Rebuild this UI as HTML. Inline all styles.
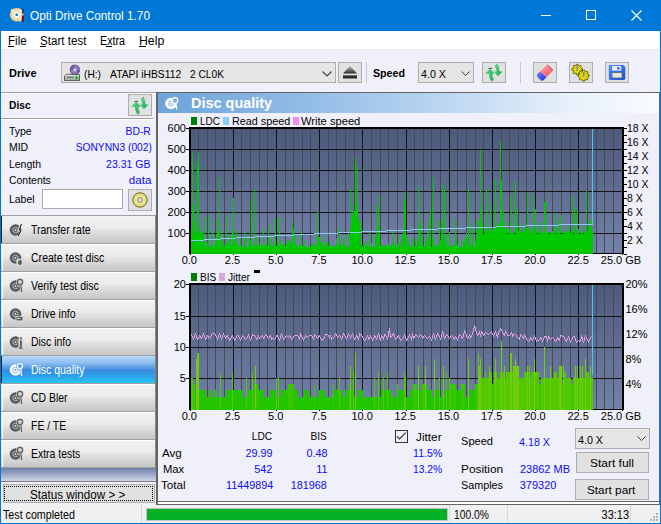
<!DOCTYPE html>
<html><head><meta charset="utf-8"><style>
html,body{margin:0;padding:0;width:661px;height:524px;overflow:hidden;background:#f0f0fa;position:relative}
.t{position:absolute;white-space:pre;font-family:"Liberation Sans", sans-serif}
</style></head><body>
<div style="position:absolute;left:0px;top:0px;width:661px;height:31px;background:#0078d7"></div>
<svg style="position:absolute;left:6px;top:4px" width="22" height="22" viewBox="6 4 22 22">
<defs><radialGradient id="cdg" cx="0.5" cy="0.5" r="0.5"><stop offset="0" stop-color="#fffdf2"/><stop offset="0.5" stop-color="#f4e8c0"/><stop offset="0.85" stop-color="#e2cf98"/><stop offset="1" stop-color="#c8b078"/></radialGradient></defs>
<circle cx="16.7" cy="14.7" r="7" fill="url(#cdg)"/>
<path d="M16.7 14.7 L12 8.5 L10.5 10.5 Z M16.7 14.7 L22 19.5 L23.2 17 Z" fill="#fff8e0" opacity="0.8"/>
<circle cx="16.7" cy="14.7" r="2.3" fill="#f8f8f8"/><circle cx="16.7" cy="14.7" r="1.3" fill="#0078d7"/>
<rect x="19.6" y="9" width="1.6" height="12.5" fill="#e8e8e8"/>
<rect x="22" y="8.5" width="1.8" height="5" fill="#203a80"/><rect x="21.8" y="15.5" width="2.2" height="6" fill="#801010"/></svg>
<div class="t" style="left:30.41px;top:10px;font-size:12px;line-height:12px;color:#fff;font-weight:normal;transform:scaleX(0.9830);transform-origin:left top;">Opti Drive Control 1.70</div>
<div style="position:absolute;left:541px;top:15px;width:10px;height:1px;background:#fff"></div>
<div style="position:absolute;left:586px;top:10px;width:10px;height:10px;border:1px solid #fff;box-sizing:border-box"></div>
<svg style="position:absolute;left:631px;top:10px" width="11" height="11" viewBox="0 0 11 11"><path d="M0.5 0.5 L10.5 10.5 M10.5 0.5 L0.5 10.5" stroke="#fff" stroke-width="1.1"/></svg>
<div style="position:absolute;left:1px;top:31px;width:659px;height:18px;background:#fff"></div>
<div style="position:absolute;left:1px;top:49px;width:659px;height:1px;background:#ebebeb"></div>
<div class="t" style="left:8.12px;top:35px;font-size:12px;line-height:12px;color:#000;font-weight:normal;transform:scaleX(0.9649);transform-origin:left top;">File</div>
<div style="position:absolute;left:8px;top:46px;width:6px;height:1px;background:#000"></div>
<div class="t" style="left:39.62px;top:35px;font-size:12px;line-height:12px;color:#000;font-weight:normal;transform:scaleX(0.9674);transform-origin:left top;">Start test</div>
<div style="position:absolute;left:40px;top:46px;width:6px;height:1px;background:#000"></div>
<div class="t" style="left:99.75px;top:35px;font-size:12px;line-height:12px;color:#000;font-weight:normal;transform:scaleX(0.8958);transform-origin:left top;">Extra</div>
<div style="position:absolute;left:106px;top:46px;width:6px;height:1px;background:#000"></div>
<div class="t" style="left:138.89px;top:35px;font-size:12px;line-height:12px;color:#000;font-weight:normal;transform:scaleX(1.0216);transform-origin:left top;">Help</div>
<div style="position:absolute;left:139px;top:46px;width:7px;height:1px;background:#000"></div>
<div style="position:absolute;left:1px;top:50px;width:659px;height:42px;background:#f0f0fa"></div>
<div class="t" style="left:9.00px;top:68px;font-size:11px;line-height:11px;color:#000;font-weight:bold;">Drive</div>
<div style="position:absolute;left:61px;top:62px;width:275px;height:21px;background:#e5e5e5;border:1px solid #adadad;box-sizing:border-box"></div>
<svg style="position:absolute;left:62px;top:63px" width="20" height="19" viewBox="62 63 20 19">
<defs><radialGradient id="pd" cx="0.5" cy="0.5" r="0.5"><stop offset="0" stop-color="#f8f4ff"/><stop offset="0.35" stop-color="#9a88c8"/><stop offset="1" stop-color="#7058a8"/></radialGradient>
<linearGradient id="dr" x1="0" y1="0" x2="0" y2="1"><stop offset="0" stop-color="#f0f0f0"/><stop offset="1" stop-color="#9a9a9a"/></linearGradient></defs>
<circle cx="74.9" cy="69.8" r="5.2" fill="url(#pd)"/>
<path d="M74.9 69.8 L70.5 67 L70 69 Z M74.9 69.8 L79 73 L79.8 71 Z M74.9 69.8 L73 64.8 L71.5 65.8 Z" fill="#50408a" opacity="0.7"/>
<circle cx="74.9" cy="69.8" r="0.9" fill="#fff"/>
<path d="M64.5 80.5 V76 L66.5 74.3 H71 L72 74.5 H79.5 V80.5 Z" fill="url(#dr)" stroke="#505050" stroke-width="0.9"/>
<rect x="66.5" y="76.5" width="7" height="1.5" fill="#707070"/>
<path d="M76.5 75.8 V79.2 M74.8 77.5 H78.2" stroke="#10c010" stroke-width="1.4"/></svg>
<div class="t" style="left:83.94px;top:69px;font-size:11px;line-height:11px;color:#000;font-weight:normal;transform:scaleX(0.9234);transform-origin:left top;">(H:)</div>
<div class="t" style="left:109.53px;top:69px;font-size:11px;line-height:11px;color:#000;font-weight:normal;transform:scaleX(0.9397);transform-origin:left top;">ATAPI iHBS112</div>
<div class="t" style="left:189.54px;top:69px;font-size:11px;line-height:11px;color:#000;font-weight:normal;transform:scaleX(0.9243);transform-origin:left top;">2 CL0K</div>
<svg style="position:absolute;left:322px;top:71px" width="10" height="6" viewBox="0 0 10 6"><path d="M0.5 0.5 L5 5 L9.5 0.5" fill="none" stroke="#404040" stroke-width="1.1"/></svg>
<div style="position:absolute;left:338px;top:62px;width:24px;height:21px;background:#e1e1e1;border:1px solid #adadad;box-sizing:border-box"></div>
<svg style="position:absolute;left:338px;top:62px" width="24" height="21" viewBox="338 62 24 21"><defs><linearGradient id="ej" x1="0" y1="0" x2="0" y2="1"><stop offset="0" stop-color="#c0c0c0"/><stop offset="1" stop-color="#282828"/></linearGradient></defs><path d="M350 66 L357 73.5 L343 73.5 Z" fill="url(#ej)"/><rect x="343" y="75" width="14" height="3.5" fill="#2a2a2a"/><rect x="343" y="75" width="14" height="1" fill="#707070"/></svg>
<div style="position:absolute;left:366px;top:62px;width:1px;height:21px;background:#c8c8c8"></div>
<div class="t" style="left:372.62px;top:68px;font-size:11px;line-height:11px;color:#000;font-weight:bold;transform:scaleX(0.9683);transform-origin:left top;">Speed</div>
<div style="position:absolute;left:418px;top:62px;width:56px;height:21px;background:#e5e5e5;border:1px solid #adadad;box-sizing:border-box"></div>
<div class="t" style="left:421.21px;top:69px;font-size:11px;line-height:11px;color:#000;font-weight:normal;transform:scaleX(0.9722);transform-origin:left top;">4.0 X</div>
<svg style="position:absolute;left:461px;top:71px" width="9" height="5" viewBox="0 0 9 5"><path d="M0.5 0.5 L4.5 4.5 L8.5 0.5" fill="none" stroke="#404040" stroke-width="1"/></svg>
<div style="position:absolute;left:482px;top:62px;width:24px;height:21px;background:#e1e1e1;border:1px solid #adadad;box-sizing:border-box"></div>
<svg style="position:absolute;left:482px;top:62px" width="24" height="21" viewBox="0 0 24 21">
<defs><linearGradient id="ga482" x1="0" y1="0" x2="1" y2="1"><stop offset="0" stop-color="#58d888"/><stop offset="1" stop-color="#22a850"/></linearGradient></defs>
<path d="M3 11.8 L8 6.8 L13 11.8 L10.3 11.8 Q10.4 15.2 11.8 18.2 L8.8 19 Q7 15.5 6.8 11.8 Z" fill="url(#ga482)"/>
<path d="M11.8 9.6 L16 14.3 L20.5 9.6 L17.7 9.6 Q17.3 5.8 15.6 2.6 L12.7 3.4 Q14.2 6.5 14.5 9.6 Z" fill="url(#ga482)"/>
<path d="M6.5 6.4 H10" stroke="#404040" stroke-width="0.9"/><path d="M14.8 3 L15.5 1.8 M16.8 4.5 L17.3 3.8 M9.8 18.8 L10.6 19.5 M11.6 16.5 L12.2 16" stroke="#505050" stroke-width="0.7"/></svg>
<div style="position:absolute;left:520px;top:62px;width:1px;height:21px;background:#c8c8c8"></div>
<div style="position:absolute;left:533px;top:62px;width:24px;height:21px;background:#e1e1e1;border:1px solid #adadad;box-sizing:border-box"></div>
<div style="position:absolute;left:569px;top:62px;width:24px;height:21px;background:#e1e1e1;border:1px solid #adadad;box-sizing:border-box"></div>
<div style="position:absolute;left:605px;top:62px;width:24px;height:21px;background:#e1e1e1;border:1px solid #adadad;box-sizing:border-box"></div>
<svg style="position:absolute;left:533px;top:62px" width="24" height="21" viewBox="533 62 24 21">
<defs><linearGradient id="er" x1="0" y1="0" x2="1" y2="1"><stop offset="0" stop-color="#ffa8b0"/><stop offset="1" stop-color="#f04858"/></linearGradient>
<linearGradient id="eb" x1="0" y1="0" x2="1" y2="1"><stop offset="0" stop-color="#7080ff"/><stop offset="1" stop-color="#2030e0"/></linearGradient></defs>
<path d="M540 71.6 L546.6 65.2 Q547.5 64.5 548.5 65.2 L552.8 69.2 Q553.4 70 552.7 70.8 L546.4 77.3 Z" fill="url(#er)"/>
<path d="M540 71.6 L546.4 77.3 L543.6 80.2 Q542.6 81 541.5 80.4 L537.3 76.6 Q536.5 75.6 537.2 74.6 Z" fill="url(#eb)"/>
<path d="M547.2 64.8 L553 70.2 M537 77 L541.5 81" stroke="#505050" stroke-width="0.6" opacity="0.7"/></svg>
<svg style="position:absolute;left:569px;top:62px" width="24" height="21" viewBox="569 62 24 21">
<path d="M581.05 68.41 L582.43 68.64 L582.43 70.36 L581.05 70.59 L580.69 71.45 L581.51 72.59 L580.29 73.81 L579.15 72.99 L578.29 73.35 L578.06 74.73 L576.34 74.73 L576.11 73.35 L575.25 72.99 L574.11 73.81 L572.89 72.59 L573.71 71.45 L573.35 70.59 L571.97 70.36 L571.97 68.64 L573.35 68.41 L573.71 67.55 L572.89 66.41 L574.11 65.19 L575.25 66.01 L576.11 65.65 L576.34 64.27 L578.06 64.27 L578.29 65.65 L579.15 66.01 L580.29 65.19 L581.51 66.41 L580.69 67.55Z" fill="#e4dc00" stroke="#4a4800" stroke-width="0.8"/>
<path d="M587.74 74.43 L589.13 74.69 L589.13 76.51 L587.74 76.77 L587.36 77.70 L588.15 78.86 L586.86 80.15 L585.70 79.36 L584.77 79.74 L584.51 81.13 L582.69 81.13 L582.43 79.74 L581.50 79.36 L580.34 80.15 L579.05 78.86 L579.84 77.70 L579.46 76.77 L578.07 76.51 L578.07 74.69 L579.46 74.43 L579.84 73.50 L579.05 72.34 L580.34 71.05 L581.50 71.84 L582.43 71.46 L582.69 70.07 L584.51 70.07 L584.77 71.46 L585.70 71.84 L586.86 71.05 L588.15 72.34 L587.36 73.50Z" fill="#e4dc00" stroke="#4a4800" stroke-width="0.8"/>
<rect x="576.4" y="65.8" width="1.7" height="5" fill="#8a8a8a"/><rect x="582.8" y="72" width="1.7" height="5" fill="#8a8a8a"/></svg>
<svg style="position:absolute;left:605px;top:62px" width="24" height="21" viewBox="605 62 24 21">
<defs><linearGradient id="fl" x1="0" y1="0" x2="1" y2="1"><stop offset="0" stop-color="#5090ff"/><stop offset="1" stop-color="#1850d8"/></linearGradient></defs>
<path d="M609.5 65 H623.3 L625.3 67 V78.6 Q625.3 80 623.9 80 H610.2 Q608.8 80 608.8 78.6 V65.7 Q608.8 65 609.5 65 Z" fill="url(#fl)"/>
<rect x="612" y="66" width="9.2" height="4.6" fill="#e8eaf0"/><circle cx="618.3" cy="68.3" r="1.2" fill="#2a60e8"/>
<rect x="612" y="72.4" width="10" height="5.6" fill="#e4e4e4" stroke="#606060" stroke-width="0.8"/></svg>
<div style="position:absolute;left:1px;top:92px;width:659px;height:1px;background:#a0a0a0"></div>
<div style="position:absolute;left:1px;top:93px;width:155px;height:1px;background:#fff"></div>
<div style="position:absolute;left:1px;top:94px;width:155px;height:430px;background:#f0f0fa"></div>
<div class="t" style="left:9.03px;top:100px;font-size:11px;line-height:11px;color:#000;font-weight:bold;transform:scaleX(0.9303);transform-origin:left top;">Disc</div>
<div style="position:absolute;left:128px;top:94px;width:24px;height:22px;background:#e1e1e1;border:1px solid #adadad;box-sizing:border-box"></div>
<svg style="position:absolute;left:128px;top:95px" width="24" height="21" viewBox="0 0 24 21">
<defs><linearGradient id="ga128" x1="0" y1="0" x2="1" y2="1"><stop offset="0" stop-color="#58d888"/><stop offset="1" stop-color="#22a850"/></linearGradient></defs>
<path d="M3 11.8 L8 6.8 L13 11.8 L10.3 11.8 Q10.4 15.2 11.8 18.2 L8.8 19 Q7 15.5 6.8 11.8 Z" fill="url(#ga128)"/>
<path d="M11.8 9.6 L16 14.3 L20.5 9.6 L17.7 9.6 Q17.3 5.8 15.6 2.6 L12.7 3.4 Q14.2 6.5 14.5 9.6 Z" fill="url(#ga128)"/>
<path d="M6.5 6.4 H10" stroke="#404040" stroke-width="0.9"/><path d="M14.8 3 L15.5 1.8 M16.8 4.5 L17.3 3.8 M9.8 18.8 L10.6 19.5 M11.6 16.5 L12.2 16" stroke="#505050" stroke-width="0.7"/></svg>
<div style="position:absolute;left:1px;top:118px;width:152px;height:1px;background:#a0a0a0"></div>
<div style="position:absolute;left:1px;top:119px;width:152px;height:1px;background:#fff"></div>
<div class="t" style="left:8.83px;top:126px;font-size:11px;line-height:11px;color:#000;font-weight:normal;transform:scaleX(0.9500);transform-origin:left top;">Type</div>
<div class="t" style="left:124.08px;top:126px;font-size:11px;line-height:11px;color:#0c0cf4;font-weight:normal;transform:scaleX(0.9463);transform-origin:right top;">BD-R</div>
<div class="t" style="left:8.83px;top:142px;font-size:11px;line-height:11px;color:#000;font-weight:normal;transform:scaleX(0.9500);transform-origin:left top;">MID</div>
<div class="t" style="left:69.84px;top:142px;font-size:11px;line-height:11px;color:#0c0cf4;font-weight:normal;transform:scaleX(0.9305);transform-origin:right top;">SONYNN3 (002)</div>
<div class="t" style="left:8.83px;top:159px;font-size:11px;line-height:11px;color:#000;font-weight:normal;transform:scaleX(0.9500);transform-origin:left top;">Length</div>
<div class="t" style="left:104.49px;top:159px;font-size:11px;line-height:11px;color:#0c0cf4;font-weight:normal;transform:scaleX(0.9564);transform-origin:right top;">23.31 GB</div>
<div class="t" style="left:8.83px;top:175px;font-size:11px;line-height:11px;color:#000;font-weight:normal;transform:scaleX(0.9500);transform-origin:left top;">Contents</div>
<div class="t" style="left:129.60px;top:175px;font-size:11px;line-height:11px;color:#0c0cf4;font-weight:normal;transform:scaleX(1.0528);transform-origin:right top;">data</div>
<div class="t" style="left:8.83px;top:194px;font-size:11px;line-height:11px;color:#000;font-weight:normal;transform:scaleX(0.9500);transform-origin:left top;">Label</div>
<div style="position:absolute;left:42px;top:189px;width:81px;height:20px;background:#fff;border:1px solid #a8a8a8;box-sizing:border-box"></div>
<div style="position:absolute;left:128px;top:189px;width:24px;height:22px;background:#e1e1e1;border:1px solid #adadad;box-sizing:border-box"></div>
<svg style="position:absolute;left:128px;top:189px" width="24" height="22" viewBox="0 0 24 22">
<defs><radialGradient id="yc" cx="0.5" cy="0.5" r="0.5"><stop offset="0" stop-color="#fbfbe0"/><stop offset="0.45" stop-color="#f2f0a8"/><stop offset="0.8" stop-color="#e0dc78"/><stop offset="1" stop-color="#b8b050"/></radialGradient></defs>
<circle cx="12" cy="11" r="7.3" fill="url(#yc)" stroke="#6a6a40" stroke-width="0.9"/><circle cx="12" cy="11" r="2.6" fill="#d8d8c8" stroke="#8a8a50" stroke-width="0.9"/></svg>
<div style="position:absolute;left:1px;top:215px;width:155px;height:1px;background:#a0a0a0"></div>
<div style="position:absolute;left:1px;top:216px;width:154px;height:27px;background:linear-gradient(#f2f2f2 0%,#ebebeb 45%,#e2e2e2 52%,#c6c6c6 100%)"></div>
<div style="position:absolute;left:1px;top:243px;width:154px;height:1px;background:#a0a0a0"></div>
<svg style="position:absolute;left:1px;top:216px" width="28" height="27" viewBox="0 0 28 27"><circle cx="14.5" cy="14" r="5.8" fill="#5c5c5c"/><circle cx="14.5" cy="14" r="2.6" fill="none" stroke="#d8d8d8" stroke-width="1.1" stroke-dasharray="1.2 0.8"/><circle cx="14.5" cy="14" r="0.9" fill="#d8d8d8"/><path d="M18.5 8 L20.8 7.5 L18.6 13.5 L20.5 13.3 L17 21 L17.8 15.5 L16.2 15.7 Z" fill="#d8d8d8"/><path d="M20.6 8 L18.2 13.8 L20 13.6 L17.3 20" fill="none" stroke="#202020" stroke-width="1"/></svg>
<div class="t" style="left:30.76px;top:224px;font-size:12px;line-height:12px;color:#000;font-weight:normal;transform:scaleX(0.8743);transform-origin:left top;">Transfer rate</div>
<div style="position:absolute;left:1px;top:244px;width:154px;height:27px;background:linear-gradient(#f2f2f2 0%,#ebebeb 45%,#e2e2e2 52%,#c6c6c6 100%)"></div>
<div style="position:absolute;left:1px;top:244px;width:154px;height:1px;background:#fff"></div>
<div style="position:absolute;left:1px;top:271px;width:154px;height:1px;background:#a0a0a0"></div>
<div style="position:absolute;left:2px;top:245px;width:1px;height:26px;background:#fafafa"></div>
<svg style="position:absolute;left:1px;top:244px" width="28" height="27" viewBox="0 0 28 27"><circle cx="14.5" cy="14" r="5.8" fill="#5c5c5c"/><circle cx="14.5" cy="14" r="2.6" fill="none" stroke="#d8d8d8" stroke-width="1.1" stroke-dasharray="1.2 0.8"/><circle cx="14.5" cy="14" r="0.9" fill="#d8d8d8"/><circle cx="18.8" cy="18" r="3.6" fill="#d8d8d8"/><path d="M18.5 21 Q16 19.5 17.5 16.5 Q18 18 19.2 15 Q21.5 17.5 20.5 20 Q20 21 18.5 21 Z" fill="#5c5c5c"/></svg>
<div class="t" style="left:30.76px;top:252px;font-size:12px;line-height:12px;color:#000;font-weight:normal;transform:scaleX(0.8789);transform-origin:left top;">Create test disc</div>
<div style="position:absolute;left:1px;top:272px;width:154px;height:27px;background:linear-gradient(#f2f2f2 0%,#ebebeb 45%,#e2e2e2 52%,#c6c6c6 100%)"></div>
<div style="position:absolute;left:1px;top:272px;width:154px;height:1px;background:#fff"></div>
<div style="position:absolute;left:1px;top:299px;width:154px;height:1px;background:#a0a0a0"></div>
<div style="position:absolute;left:2px;top:273px;width:1px;height:26px;background:#fafafa"></div>
<svg style="position:absolute;left:1px;top:272px" width="28" height="27" viewBox="0 0 28 27"><circle cx="14.5" cy="14" r="5.8" fill="#5c5c5c"/><circle cx="14.5" cy="14" r="2.6" fill="none" stroke="#d8d8d8" stroke-width="1.1" stroke-dasharray="1.2 0.8"/><circle cx="14.5" cy="14" r="0.9" fill="#d8d8d8"/><circle cx="19" cy="10" r="3.7" fill="#d8d8d8"/><circle cx="19" cy="10" r="2.6" fill="#d8d8d8" stroke="#5c5c5c" stroke-width="1.2"/><path d="M19.8 13.2 L20.6 20" stroke="#d8d8d8" stroke-width="2.6"/><path d="M19.8 13.2 L20.6 20" stroke="#5c5c5c" stroke-width="1.2"/></svg>
<div class="t" style="left:30.76px;top:280px;font-size:12px;line-height:12px;color:#000;font-weight:normal;transform:scaleX(0.8773);transform-origin:left top;">Verify test disc</div>
<div style="position:absolute;left:1px;top:300px;width:154px;height:27px;background:linear-gradient(#f2f2f2 0%,#ebebeb 45%,#e2e2e2 52%,#c6c6c6 100%)"></div>
<div style="position:absolute;left:1px;top:300px;width:154px;height:1px;background:#fff"></div>
<div style="position:absolute;left:1px;top:327px;width:154px;height:1px;background:#a0a0a0"></div>
<div style="position:absolute;left:2px;top:301px;width:1px;height:26px;background:#fafafa"></div>
<svg style="position:absolute;left:1px;top:300px" width="28" height="27" viewBox="0 0 28 27"><circle cx="14.5" cy="14" r="5.8" fill="#5c5c5c"/><circle cx="14.5" cy="14" r="2.6" fill="none" stroke="#d8d8d8" stroke-width="1.1" stroke-dasharray="1.2 0.8"/><circle cx="14.5" cy="14" r="0.9" fill="#d8d8d8"/><rect x="14.5" y="16" width="7.5" height="5" fill="#d8d8d8"/><rect x="15.5" y="16.8" width="6" height="3.6" fill="#5c5c5c"/><rect x="16.3" y="18" width="3" height="1" fill="#d8d8d8"/></svg>
<div class="t" style="left:30.76px;top:308px;font-size:12px;line-height:12px;color:#000;font-weight:normal;transform:scaleX(0.8795);transform-origin:left top;">Drive info</div>
<div style="position:absolute;left:1px;top:328px;width:154px;height:27px;background:linear-gradient(#f2f2f2 0%,#ebebeb 45%,#e2e2e2 52%,#c6c6c6 100%)"></div>
<div style="position:absolute;left:1px;top:328px;width:154px;height:1px;background:#fff"></div>
<div style="position:absolute;left:1px;top:355px;width:154px;height:1px;background:#a0a0a0"></div>
<div style="position:absolute;left:2px;top:329px;width:1px;height:26px;background:#fafafa"></div>
<svg style="position:absolute;left:1px;top:328px" width="28" height="27" viewBox="0 0 28 27"><circle cx="14.5" cy="14" r="5.8" fill="#5c5c5c"/><circle cx="14.5" cy="14" r="2.6" fill="none" stroke="#d8d8d8" stroke-width="1.1" stroke-dasharray="1.2 0.8"/><circle cx="14.5" cy="14" r="0.9" fill="#d8d8d8"/><rect x="17.5" y="9" width="4.5" height="12.5" fill="#d8d8d8"/><rect x="19" y="9.5" width="1.8" height="1.8" fill="#5c5c5c"/><rect x="19" y="12.5" width="1.8" height="7" fill="#5c5c5c"/><rect x="17.8" y="19.5" width="3.8" height="1.3" fill="#5c5c5c"/></svg>
<div class="t" style="left:30.77px;top:336px;font-size:12px;line-height:12px;color:#000;font-weight:normal;transform:scaleX(0.8700);transform-origin:left top;">Disc info</div>
<div style="position:absolute;left:1px;top:356px;width:154px;height:27px;background:linear-gradient(#b4d6f8 0%,#90c0f0 25%,#4c94e0 48%,#3a8ade 52%,#2aa6ea 78%,#28c4f4 100%)"></div>
<div style="position:absolute;left:1px;top:356px;width:154px;height:1px;#c8e4fc"></div>
<div style="position:absolute;left:1px;top:383px;width:154px;height:1px;background:#a0a0a0"></div>
<svg style="position:absolute;left:1px;top:356px" width="28" height="27" viewBox="0 0 28 27"><circle cx="14.5" cy="14" r="5.8" fill="#fff"/><circle cx="14.5" cy="14" r="2.6" fill="none" stroke="#5a9ee4" stroke-width="1.1" stroke-dasharray="1.2 0.8"/><circle cx="14.5" cy="14" r="0.9" fill="#5a9ee4"/><circle cx="19" cy="10" r="3.7" fill="#5a9ee4"/><circle cx="19" cy="10" r="2.6" fill="#5a9ee4" stroke="#fff" stroke-width="1.2"/><path d="M19.8 13.2 L20.6 20" stroke="#5a9ee4" stroke-width="2.6"/><path d="M19.8 13.2 L20.6 20" stroke="#fff" stroke-width="1.2"/></svg>
<div class="t" style="left:30.76px;top:364px;font-size:12px;line-height:12px;color:#fff;font-weight:normal;transform:scaleX(0.8714);transform-origin:left top;">Disc quality</div>
<div style="position:absolute;left:1px;top:384px;width:154px;height:27px;background:linear-gradient(#f2f2f2 0%,#ebebeb 45%,#e2e2e2 52%,#c6c6c6 100%)"></div>
<div style="position:absolute;left:1px;top:384px;width:154px;height:1px;background:#fff"></div>
<div style="position:absolute;left:1px;top:411px;width:154px;height:1px;background:#a0a0a0"></div>
<div style="position:absolute;left:2px;top:385px;width:1px;height:26px;background:#fafafa"></div>
<svg style="position:absolute;left:1px;top:384px" width="28" height="27" viewBox="0 0 28 27"><circle cx="14.5" cy="14" r="5.8" fill="#5c5c5c"/><circle cx="14.5" cy="14" r="2.6" fill="none" stroke="#d8d8d8" stroke-width="1.1" stroke-dasharray="1.2 0.8"/><circle cx="14.5" cy="14" r="0.9" fill="#d8d8d8"/><circle cx="19" cy="10" r="3.7" fill="#d8d8d8"/><circle cx="19" cy="10" r="2.6" fill="#d8d8d8" stroke="#5c5c5c" stroke-width="1.2"/><path d="M19.8 13.2 L20.6 20" stroke="#d8d8d8" stroke-width="2.6"/><path d="M19.8 13.2 L20.6 20" stroke="#5c5c5c" stroke-width="1.2"/></svg>
<div class="t" style="left:30.77px;top:392px;font-size:12px;line-height:12px;color:#000;font-weight:normal;transform:scaleX(0.8700);transform-origin:left top;">CD Bler</div>
<div style="position:absolute;left:1px;top:412px;width:154px;height:27px;background:linear-gradient(#f2f2f2 0%,#ebebeb 45%,#e2e2e2 52%,#c6c6c6 100%)"></div>
<div style="position:absolute;left:1px;top:412px;width:154px;height:1px;background:#fff"></div>
<div style="position:absolute;left:1px;top:439px;width:154px;height:1px;background:#a0a0a0"></div>
<div style="position:absolute;left:2px;top:413px;width:1px;height:26px;background:#fafafa"></div>
<svg style="position:absolute;left:1px;top:412px" width="28" height="27" viewBox="0 0 28 27"><circle cx="14.5" cy="14" r="5.8" fill="#5c5c5c"/><circle cx="14.5" cy="14" r="2.6" fill="none" stroke="#d8d8d8" stroke-width="1.1" stroke-dasharray="1.2 0.8"/><circle cx="14.5" cy="14" r="0.9" fill="#d8d8d8"/><circle cx="19" cy="10" r="3.7" fill="#d8d8d8"/><circle cx="19" cy="10" r="2.6" fill="#d8d8d8" stroke="#5c5c5c" stroke-width="1.2"/><path d="M19.8 13.2 L20.6 20" stroke="#d8d8d8" stroke-width="2.6"/><path d="M19.8 13.2 L20.6 20" stroke="#5c5c5c" stroke-width="1.2"/></svg>
<div class="t" style="left:30.77px;top:420px;font-size:12px;line-height:12px;color:#000;font-weight:normal;transform:scaleX(0.8700);transform-origin:left top;">FE / TE</div>
<div style="position:absolute;left:1px;top:440px;width:154px;height:27px;background:linear-gradient(#f2f2f2 0%,#ebebeb 45%,#e2e2e2 52%,#c6c6c6 100%)"></div>
<div style="position:absolute;left:1px;top:440px;width:154px;height:1px;background:#fff"></div>
<div style="position:absolute;left:1px;top:467px;width:154px;height:1px;background:#a0a0a0"></div>
<div style="position:absolute;left:2px;top:441px;width:1px;height:26px;background:#fafafa"></div>
<svg style="position:absolute;left:1px;top:440px" width="28" height="27" viewBox="0 0 28 27"><circle cx="14.5" cy="14" r="5.8" fill="#5c5c5c"/><circle cx="14.5" cy="14" r="2.6" fill="none" stroke="#d8d8d8" stroke-width="1.1" stroke-dasharray="1.2 0.8"/><circle cx="14.5" cy="14" r="0.9" fill="#d8d8d8"/><circle cx="19" cy="10" r="3.7" fill="#d8d8d8"/><circle cx="19" cy="10" r="2.6" fill="#d8d8d8" stroke="#5c5c5c" stroke-width="1.2"/><path d="M19.8 13.2 L20.6 20" stroke="#d8d8d8" stroke-width="2.6"/><path d="M19.8 13.2 L20.6 20" stroke="#5c5c5c" stroke-width="1.2"/></svg>
<div class="t" style="left:30.77px;top:448px;font-size:12px;line-height:12px;color:#000;font-weight:normal;transform:scaleX(0.8700);transform-origin:left top;">Extra tests</div>
<div style="position:absolute;left:1px;top:216px;width:1px;height:27px;background:#1a1a1a"></div>
<div style="position:absolute;left:155px;top:216px;width:1px;height:252px;background:#8a8a8a"></div>
<div style="position:absolute;left:1px;top:356px;width:1px;height:27px;background:#1a1a1a"></div>
<div style="position:absolute;left:1px;top:468px;width:155px;height:13px;background:linear-gradient(#6e7ea6,#d0d4e8)"></div>
<div style="position:absolute;left:1px;top:481px;width:155px;height:1px;background:#808080"></div>
<div style="position:absolute;left:1px;top:482px;width:155px;height:21px;background:#f0f0fa"></div>
<div style="position:absolute;left:3px;top:484px;width:152px;height:19px;background:#e1e1e1;border:1px solid #adadad;box-sizing:border-box"></div>
<div style="position:absolute;left:4px;top:486px;width:149px;height:15px;border:1px dotted #000;box-sizing:border-box"></div>
<div class="t" style="left:29.81px;top:489px;font-size:12px;line-height:12px;color:#000;font-weight:normal;transform:scaleX(0.9726);transform-origin:left top;">Status window &gt; &gt;</div>
<div style="position:absolute;left:158px;top:93px;width:501px;height:408px;background:#f0f0fa"></div>
<div style="position:absolute;left:156px;top:92px;width:504px;height:1px;background:#646464"></div>
<div style="position:absolute;left:156px;top:92px;width:2px;height:413px;background:#646464"></div>
<div style="position:absolute;left:659px;top:92px;width:1px;height:413px;background:#646464"></div>
<div style="position:absolute;left:156px;top:501px;width:504px;height:1px;background:#646464"></div>
<div style="position:absolute;left:158px;top:502px;width:501px;height:2px;background:#ffffff"></div>
<div style="position:absolute;left:156px;top:504px;width:504px;height:1px;background:#646464"></div>
<div style="position:absolute;left:158px;top:93px;width:501px;height:20px;background:linear-gradient(90deg,#6ea4d8 0%,#8cb8e4 25%,#b8d4f0 55%,#e4eefa 80%,#fafcff 100%)"></div>
<svg style="position:absolute;left:165px;top:97px" width="14" height="13" viewBox="0 0 14 13">
<circle cx="6" cy="6.5" r="5.8" fill="#fff"/><circle cx="6" cy="6.5" r="2.3" fill="none" stroke="#7aaee0" stroke-width="1"/><circle cx="6" cy="6.5" r="0.8" fill="#7aaee0"/>
<circle cx="10" cy="3.5" r="2.8" fill="#7aaee0" stroke="#fff" stroke-width="1.2"/><path d="M10.8 6.5 L11.8 12.5" stroke="#fff" stroke-width="1.3"/></svg>
<div class="t" style="left:191.32px;top:95px;font-size:15px;line-height:15px;color:#fff;font-weight:bold;transform:scaleX(0.9639);transform-origin:left top;">Disc quality</div>
<svg style="position:absolute;left:0;top:0" width="661" height="524" viewBox="0 0 661 524"><defs><linearGradient id="bg1" x1="0" y1="0" x2="0" y2="1"><stop offset="0" stop-color="#4c5a7c"/><stop offset="1" stop-color="#7382aa"/></linearGradient></defs><rect x="191" y="129" width="431" height="124" fill="url(#bg1)"/><path d="M198 129V253h1V129ZM207 129V253h1V129ZM215 129V253h1V129ZM224 129V253h1V129ZM241 129V253h1V129ZM250 129V253h1V129ZM259 129V253h1V129ZM267 129V253h1V129ZM285 129V253h1V129ZM293 129V253h1V129ZM302 129V253h1V129ZM310 129V253h1V129ZM328 129V253h1V129ZM336 129V253h1V129ZM345 129V253h1V129ZM354 129V253h1V129ZM371 129V253h1V129ZM380 129V253h1V129ZM388 129V253h1V129ZM397 129V253h1V129ZM414 129V253h1V129ZM423 129V253h1V129ZM431 129V253h1V129ZM440 129V253h1V129ZM457 129V253h1V129ZM466 129V253h1V129ZM475 129V253h1V129ZM483 129V253h1V129ZM501 129V253h1V129ZM509 129V253h1V129ZM518 129V253h1V129ZM526 129V253h1V129ZM544 129V253h1V129ZM552 129V253h1V129ZM561 129V253h1V129ZM570 129V253h1V129ZM587 129V253h1V129ZM596 129V253h1V129ZM604 129V253h1V129ZM613 129V253h1V129Z" fill="#4a4a4e" shape-rendering="crispEdges"/><path d="M233 129V253h1V129ZM276 129V253h1V129ZM319 129V253h1V129ZM362 129V253h1V129ZM406 129V253h1V129ZM449 129V253h1V129ZM492 129V253h1V129ZM535 129V253h1V129ZM578 129V253h1V129Z" fill="#141414" shape-rendering="crispEdges"/><path d="M191 149H622v1H191ZM191 170H622v1H191ZM191 191H622v1H191ZM191 212H622v1H191ZM191 233H622v1H191Z" fill="#141414" shape-rendering="crispEdges"/><path d="M191 253H622v1H191Z" fill="#000" shape-rendering="crispEdges"/><path d="M191 230V254h1V230ZM192 153V254h1V153ZM193 205V254h1V205ZM194 233V254h1V233ZM195 221V254h1V221ZM196 233V254h1V233ZM197 162V254h1V162ZM198 152V254h1V152ZM199 226V254h1V226ZM200 232V254h1V232ZM201 231V254h1V231ZM202 233V254h1V233ZM203 237V254h1V237ZM204 217V254h1V217ZM205 247V254h1V247ZM206 243V254h1V243ZM207 243V254h1V243ZM208 215V254h1V215ZM209 247V254h1V247ZM210 246V254h1V246ZM211 247V254h1V247ZM212 231V254h1V231ZM213 245V254h1V245ZM214 246V254h1V246ZM215 238V254h1V238ZM216 241V254h1V241ZM217 219V254h1V219ZM218 233V254h1V233ZM219 177V254h1V177ZM220 247V254h1V247ZM221 230V254h1V230ZM222 243V254h1V243ZM223 239V254h1V239ZM224 246V254h1V246ZM225 246V254h1V246ZM226 215V254h1V215ZM227 243V254h1V243ZM228 244V254h1V244ZM229 236V254h1V236ZM230 235V254h1V235ZM231 245V254h1V245ZM232 230V254h1V230ZM233 198V254h1V198ZM234 243V254h1V243ZM235 235V254h1V235ZM236 231V254h1V231ZM237 243V254h1V243ZM238 247V254h1V247ZM239 246V254h1V246ZM240 237V254h1V237ZM241 246V254h1V246ZM242 247V254h1V247ZM243 246V254h1V246ZM244 232V254h1V232ZM245 237V254h1V237ZM246 247V254h1V247ZM247 247V254h1V247ZM248 245V254h1V245ZM249 238V254h1V238ZM250 240V254h1V240ZM251 199V254h1V199ZM252 246V254h1V246ZM253 244V254h1V244ZM254 189V254h1V189ZM255 246V254h1V246ZM256 236V254h1V236ZM257 245V254h1V245ZM258 245V254h1V245ZM259 244V254h1V244ZM260 246V254h1V246ZM261 244V254h1V244ZM262 245V254h1V245ZM263 229V254h1V229ZM264 242V254h1V242ZM265 246V254h1V246ZM266 245V254h1V245ZM267 246V254h1V246ZM268 223V254h1V223ZM269 244V254h1V244ZM270 237V254h1V237ZM271 246V254h1V246ZM272 247V254h1V247ZM273 245V254h1V245ZM274 242V254h1V242ZM275 218V254h1V218ZM276 246V254h1V246ZM277 241V254h1V241ZM278 246V254h1V246ZM279 218V254h1V218ZM280 240V254h1V240ZM281 244V254h1V244ZM282 245V254h1V245ZM283 244V254h1V244ZM284 244V254h1V244ZM285 246V254h1V246ZM286 244V254h1V244ZM287 240V254h1V240ZM288 241V254h1V241ZM289 241V254h1V241ZM290 246V254h1V246ZM291 241V254h1V241ZM292 222V254h1V222ZM293 229V254h1V229ZM294 244V254h1V244ZM295 234V254h1V234ZM296 245V254h1V245ZM297 246V254h1V246ZM298 247V254h1V247ZM299 246V254h1V246ZM300 244V254h1V244ZM301 231V254h1V231ZM302 246V254h1V246ZM303 245V254h1V245ZM304 240V254h1V240ZM305 247V254h1V247ZM306 246V254h1V246ZM307 247V254h1V247ZM308 247V254h1V247ZM309 246V254h1V246ZM310 247V254h1V247ZM311 245V254h1V245ZM312 243V254h1V243ZM313 244V254h1V244ZM314 246V254h1V246ZM315 243V254h1V243ZM316 246V254h1V246ZM317 212V254h1V212ZM318 236V254h1V236ZM319 237V254h1V237ZM320 243V254h1V243ZM321 242V254h1V242ZM322 242V254h1V242ZM323 247V254h1V247ZM324 246V254h1V246ZM325 236V254h1V236ZM326 243V254h1V243ZM327 242V254h1V242ZM328 246V254h1V246ZM329 243V254h1V243ZM330 247V254h1V247ZM331 246V254h1V246ZM332 246V254h1V246ZM333 245V254h1V245ZM334 247V254h1V247ZM335 246V254h1V246ZM336 238V254h1V238ZM337 245V254h1V245ZM338 243V254h1V243ZM339 228V254h1V228ZM340 244V254h1V244ZM341 245V254h1V245ZM342 246V254h1V246ZM343 238V254h1V238ZM344 247V254h1V247ZM345 235V254h1V235ZM346 246V254h1V246ZM347 246V254h1V246ZM348 232V254h1V232ZM349 247V254h1V247ZM350 188V254h1V188ZM351 227V254h1V227ZM352 211V254h1V211ZM353 216V254h1V216ZM354 211V254h1V211ZM355 158V254h1V158ZM356 204V254h1V204ZM357 166V254h1V166ZM358 220V254h1V220ZM359 220V254h1V220ZM360 225V254h1V225ZM361 246V254h1V246ZM362 246V254h1V246ZM363 245V254h1V245ZM364 242V254h1V242ZM365 247V254h1V247ZM366 242V254h1V242ZM367 246V254h1V246ZM368 247V254h1V247ZM369 233V254h1V233ZM370 247V254h1V247ZM371 243V254h1V243ZM372 246V254h1V246ZM373 247V254h1V247ZM374 247V254h1V247ZM375 234V254h1V234ZM376 206V254h1V206ZM377 237V254h1V237ZM378 196V254h1V196ZM379 226V254h1V226ZM380 246V254h1V246ZM381 245V254h1V245ZM382 245V254h1V245ZM383 246V254h1V246ZM384 246V254h1V246ZM385 244V254h1V244ZM386 246V254h1V246ZM387 246V254h1V246ZM388 243V254h1V243ZM389 245V254h1V245ZM390 246V254h1V246ZM391 246V254h1V246ZM392 231V254h1V231ZM393 243V254h1V243ZM394 246V254h1V246ZM395 242V254h1V242ZM396 247V254h1V247ZM397 244V254h1V244ZM398 235V254h1V235ZM399 246V254h1V246ZM400 242V254h1V242ZM401 247V254h1V247ZM402 235V254h1V235ZM403 231V254h1V231ZM404 200V254h1V200ZM405 192V254h1V192ZM406 235V254h1V235ZM407 246V254h1V246ZM408 244V254h1V244ZM409 239V254h1V239ZM410 247V254h1V247ZM411 247V254h1V247ZM412 239V254h1V239ZM413 246V254h1V246ZM414 246V254h1V246ZM415 238V254h1V238ZM416 246V254h1V246ZM417 241V254h1V241ZM418 186V254h1V186ZM419 226V254h1V226ZM420 221V254h1V221ZM421 246V254h1V246ZM422 237V254h1V237ZM423 246V254h1V246ZM424 247V254h1V247ZM425 244V254h1V244ZM426 241V254h1V241ZM427 232V254h1V232ZM428 219V254h1V219ZM429 238V254h1V238ZM430 209V254h1V209ZM431 247V254h1V247ZM432 239V254h1V239ZM433 177V254h1V177ZM434 246V254h1V246ZM435 246V254h1V246ZM436 246V254h1V246ZM437 244V254h1V244ZM438 246V254h1V246ZM439 221V254h1V221ZM440 240V254h1V240ZM441 221V254h1V221ZM442 184V254h1V184ZM443 236V254h1V236ZM444 188V254h1V188ZM445 242V254h1V242ZM446 234V254h1V234ZM447 246V254h1V246ZM448 247V254h1V247ZM449 232V254h1V232ZM450 245V254h1V245ZM451 247V254h1V247ZM452 246V254h1V246ZM453 245V254h1V245ZM454 243V254h1V243ZM455 218V254h1V218ZM456 239V254h1V239ZM457 245V254h1V245ZM458 247V254h1V247ZM459 247V254h1V247ZM460 247V254h1V247ZM461 239V254h1V239ZM462 247V254h1V247ZM463 241V254h1V241ZM464 244V254h1V244ZM465 237V254h1V237ZM466 233V254h1V233ZM467 239V254h1V239ZM468 188V254h1V188ZM469 247V254h1V247ZM470 228V254h1V228ZM471 246V254h1V246ZM472 225V254h1V225ZM473 245V254h1V245ZM474 247V254h1V247ZM475 241V254h1V241ZM476 236V254h1V236ZM477 220V254h1V220ZM478 229V254h1V229ZM479 220V254h1V220ZM480 150V254h1V150ZM481 209V254h1V209ZM482 224V254h1V224ZM483 234V254h1V234ZM484 230V254h1V230ZM485 231V254h1V231ZM486 188V254h1V188ZM487 229V254h1V229ZM488 226V254h1V226ZM489 233V254h1V233ZM490 206V254h1V206ZM491 231V254h1V231ZM492 229V254h1V229ZM493 231V254h1V231ZM494 227V254h1V227ZM495 179V254h1V179ZM496 225V254h1V225ZM497 224V254h1V224ZM498 227V254h1V227ZM499 222V254h1V222ZM500 141V254h1V141ZM501 181V254h1V181ZM502 223V254h1V223ZM503 211V254h1V211ZM504 229V254h1V229ZM505 229V254h1V229ZM506 229V254h1V229ZM507 221V254h1V221ZM508 234V254h1V234ZM509 229V254h1V229ZM510 233V254h1V233ZM511 195V254h1V195ZM512 233V254h1V233ZM513 231V254h1V231ZM514 234V254h1V234ZM515 181V254h1V181ZM516 226V254h1V226ZM517 209V254h1V209ZM518 231V254h1V231ZM519 225V254h1V225ZM520 232V254h1V232ZM521 231V254h1V231ZM522 223V254h1V223ZM523 232V254h1V232ZM524 229V254h1V229ZM525 229V254h1V229ZM526 228V254h1V228ZM527 193V254h1V193ZM528 225V254h1V225ZM529 231V254h1V231ZM530 233V254h1V233ZM531 230V254h1V230ZM532 229V254h1V229ZM533 194V254h1V194ZM534 227V254h1V227ZM535 209V254h1V209ZM536 232V254h1V232ZM537 234V254h1V234ZM538 223V254h1V223ZM539 231V254h1V231ZM540 222V254h1V222ZM541 233V254h1V233ZM542 232V254h1V232ZM543 233V254h1V233ZM544 202V254h1V202ZM545 201V254h1V201ZM546 232V254h1V232ZM547 232V254h1V232ZM548 233V254h1V233ZM549 234V254h1V234ZM550 232V254h1V232ZM551 233V254h1V233ZM552 231V254h1V231ZM553 228V254h1V228ZM554 213V254h1V213ZM555 234V254h1V234ZM556 225V254h1V225ZM557 232V254h1V232ZM558 233V254h1V233ZM559 219V254h1V219ZM560 234V254h1V234ZM561 215V254h1V215ZM562 234V254h1V234ZM563 232V254h1V232ZM564 228V254h1V228ZM565 232V254h1V232ZM566 232V254h1V232ZM567 231V254h1V231ZM568 231V254h1V231ZM569 226V254h1V226ZM570 233V254h1V233ZM571 231V254h1V231ZM572 195V254h1V195ZM573 234V254h1V234ZM574 208V254h1V208ZM575 229V254h1V229ZM576 233V254h1V233ZM577 210V254h1V210ZM578 229V254h1V229ZM579 234V254h1V234ZM580 231V254h1V231ZM581 232V254h1V232ZM582 225V254h1V225ZM583 234V254h1V234ZM584 233V254h1V233ZM585 232V254h1V232ZM586 191V254h1V191ZM587 230V254h1V230ZM588 227V254h1V227ZM589 227V254h1V227ZM590 220V254h1V220ZM591 221V254h1V221ZM592 232V254h1V232Z" fill="#00c800" shape-rendering="crispEdges"/><path d="M191 240H204v1H191ZM204 239H220v1H204ZM220 238H236v1H220ZM236 237H255v1H236ZM255 236H274v1H255ZM274 235H294v1H274ZM294 234H314v1H294ZM314 233H338v1H314ZM338 232H362v1H338ZM362 231H386v1H362ZM386 230H411v1H386ZM411 229H438v1H411ZM438 228H466v1H438ZM466 227H496v1H466ZM496 226H526v1H496ZM526 225H559v1H526ZM559 224H593v1H559Z" fill="#8ccaf2" shape-rendering="crispEdges"/><rect x="592" y="129" width="1" height="95" fill="#40c8f0"/><path d="M189 127H624v2H191V254H189Z M622 129h2V254h-2Z" fill="#000" shape-rendering="crispEdges"/><path d="M186 233h3v1h-3ZM186 212h3v1h-3ZM186 191h3v1h-3ZM186 170h3v1h-3ZM186 149h3v1h-3ZM186 128h3v1h-3ZM624 254h3v1h-3ZM624 247h3v1h-3ZM624 240h3v1h-3ZM624 233h3v1h-3ZM624 226h3v1h-3ZM624 219h3v1h-3ZM624 212h3v1h-3ZM624 205h3v1h-3ZM624 198h3v1h-3ZM624 191h3v1h-3ZM624 184h3v1h-3ZM624 177h3v1h-3ZM624 170h3v1h-3ZM624 163h3v1h-3ZM624 156h3v1h-3ZM624 149h3v1h-3ZM624 142h3v1h-3ZM624 135h3v1h-3ZM624 128h3v1h-3ZM190 254h1v1h-1ZM233 254h1v1h-1ZM276 254h1v1h-1ZM319 254h1v1h-1ZM362 254h1v1h-1ZM406 254h1v1h-1ZM449 254h1v1h-1ZM492 254h1v1h-1ZM535 254h1v1h-1ZM578 254h1v1h-1ZM622 254h1v1h-1Z" fill="#000" shape-rendering="crispEdges"/><rect x="191" y="285" width="431" height="124" fill="url(#bg1)"/><path d="M198 285V409h1V285ZM207 285V409h1V285ZM215 285V409h1V285ZM224 285V409h1V285ZM241 285V409h1V285ZM250 285V409h1V285ZM259 285V409h1V285ZM267 285V409h1V285ZM285 285V409h1V285ZM293 285V409h1V285ZM302 285V409h1V285ZM310 285V409h1V285ZM328 285V409h1V285ZM336 285V409h1V285ZM345 285V409h1V285ZM354 285V409h1V285ZM371 285V409h1V285ZM380 285V409h1V285ZM388 285V409h1V285ZM397 285V409h1V285ZM414 285V409h1V285ZM423 285V409h1V285ZM431 285V409h1V285ZM440 285V409h1V285ZM457 285V409h1V285ZM466 285V409h1V285ZM475 285V409h1V285ZM483 285V409h1V285ZM501 285V409h1V285ZM509 285V409h1V285ZM518 285V409h1V285ZM526 285V409h1V285ZM544 285V409h1V285ZM552 285V409h1V285ZM561 285V409h1V285ZM570 285V409h1V285ZM587 285V409h1V285ZM596 285V409h1V285ZM604 285V409h1V285ZM613 285V409h1V285Z" fill="#4a4a4e" shape-rendering="crispEdges"/><path d="M233 285V409h1V285ZM276 285V409h1V285ZM319 285V409h1V285ZM362 285V409h1V285ZM406 285V409h1V285ZM449 285V409h1V285ZM492 285V409h1V285ZM535 285V409h1V285ZM578 285V409h1V285Z" fill="#141414" shape-rendering="crispEdges"/><path d="M191 316H622v1H191ZM191 347H622v1H191ZM191 378H622v1H191Z" fill="#141414" shape-rendering="crispEdges"/><path d="M191 409H622v1H191Z" fill="#000" shape-rendering="crispEdges"/><rect x="592" y="285" width="1" height="90" fill="#40c8f0"/><path d="M191 378V410h1V378ZM192 378V410h1V378ZM220 372V410h1V372ZM232 372V410h1V372ZM246 378V410h1V378ZM252 372V410h1V372ZM276 378V410h1V378ZM278 378V410h1V378ZM339 378V410h1V378ZM353 372V410h1V372ZM374 378V410h1V378ZM378 372V410h1V372ZM383 378V410h1V378ZM387 372V410h1V372ZM404 372V410h1V372ZM405 378V410h1V378ZM439 378V410h1V378ZM446 372V410h1V372ZM449 378V410h1V378ZM481 378V410h1V378ZM482 378V410h1V378ZM483 378V410h1V378ZM484 378V410h1V378ZM485 372V410h1V372ZM486 378V410h1V378ZM487 378V410h1V378ZM488 378V410h1V378ZM490 372V410h1V372ZM491 372V410h1V372ZM494 372V410h1V372ZM496 372V410h1V372ZM497 378V410h1V378ZM498 378V410h1V378ZM499 378V410h1V378ZM500 372V410h1V372ZM502 372V410h1V372ZM503 372V410h1V372ZM505 378V410h1V378ZM506 372V410h1V372ZM507 372V410h1V372ZM508 372V410h1V372ZM509 372V410h1V372ZM512 372V410h1V372ZM519 378V410h1V378ZM520 378V410h1V378ZM521 378V410h1V378ZM522 378V410h1V378ZM523 378V410h1V378ZM524 372V410h1V372ZM525 372V410h1V372ZM526 372V410h1V372ZM528 372V410h1V372ZM530 378V410h1V378ZM531 372V410h1V372ZM532 372V410h1V372ZM533 372V410h1V372ZM535 372V410h1V372ZM536 372V410h1V372ZM537 372V410h1V372ZM538 372V410h1V372ZM541 378V410h1V378ZM542 378V410h1V378ZM543 378V410h1V378ZM545 378V410h1V378ZM546 378V410h1V378ZM547 378V410h1V378ZM548 378V410h1V378ZM549 378V410h1V378ZM551 378V410h1V378ZM552 378V410h1V378ZM553 378V410h1V378ZM554 372V410h1V372ZM555 372V410h1V372ZM556 372V410h1V372ZM557 378V410h1V378ZM558 378V410h1V378ZM564 372V410h1V372ZM565 372V410h1V372ZM566 378V410h1V378ZM567 378V410h1V378ZM568 378V410h1V378ZM569 378V410h1V378ZM570 378V410h1V378ZM573 378V410h1V378ZM574 378V410h1V378ZM576 378V410h1V378ZM578 378V410h1V378ZM579 378V410h1V378ZM581 378V410h1V378ZM583 378V410h1V378ZM584 378V410h1V378ZM586 372V410h1V372ZM587 372V410h1V372ZM588 372V410h1V372ZM589 378V410h1V378ZM591 378V410h1V378ZM592 378V410h1V378Z" fill="#52c800" shape-rendering="crispEdges"/><path d="M193 384V410h1V384ZM194 384V410h1V384ZM254 384V410h1V384ZM256 384V410h1V384ZM257 384V410h1V384ZM288 384V410h1V384ZM289 384V410h1V384ZM290 384V410h1V384ZM291 384V410h1V384ZM292 384V410h1V384ZM293 384V410h1V384ZM314 384V410h1V384ZM333 384V410h1V384ZM349 384V410h1V384ZM397 384V410h1V384ZM413 384V410h1V384ZM414 384V410h1V384ZM415 384V410h1V384ZM416 384V410h1V384ZM422 384V410h1V384ZM423 384V410h1V384ZM424 384V410h1V384ZM426 384V410h1V384ZM450 384V410h1V384ZM451 384V410h1V384ZM452 384V410h1V384ZM453 384V410h1V384ZM454 384V410h1V384ZM455 384V410h1V384ZM461 384V410h1V384ZM462 384V410h1V384ZM463 384V410h1V384ZM464 384V410h1V384ZM475 384V410h1V384ZM476 384V410h1V384ZM477 384V410h1V384ZM492 384V410h1V384ZM493 384V410h1V384ZM539 384V410h1V384ZM540 384V410h1V384ZM562 384V410h1V384ZM571 384V410h1V384ZM572 384V410h1V384Z" fill="#38c600" shape-rendering="crispEdges"/><path d="M195 390V410h1V390ZM199 390V410h1V390ZM200 390V410h1V390ZM201 390V410h1V390ZM202 390V410h1V390ZM203 390V410h1V390ZM204 390V410h1V390ZM205 390V410h1V390ZM206 397V410h1V397ZM207 397V410h1V397ZM208 397V410h1V397ZM209 390V410h1V390ZM210 390V410h1V390ZM211 397V410h1V397ZM212 390V410h1V390ZM213 397V410h1V397ZM214 397V410h1V397ZM215 390V410h1V390ZM216 390V410h1V390ZM217 397V410h1V397ZM218 397V410h1V397ZM219 397V410h1V397ZM221 397V410h1V397ZM222 397V410h1V397ZM223 397V410h1V397ZM224 397V410h1V397ZM225 397V410h1V397ZM226 390V410h1V390ZM227 390V410h1V390ZM228 390V410h1V390ZM229 390V410h1V390ZM230 390V410h1V390ZM231 390V410h1V390ZM233 390V410h1V390ZM234 390V410h1V390ZM235 390V410h1V390ZM236 390V410h1V390ZM237 390V410h1V390ZM238 390V410h1V390ZM239 390V410h1V390ZM240 390V410h1V390ZM241 390V410h1V390ZM242 390V410h1V390ZM243 397V410h1V397ZM244 397V410h1V397ZM245 397V410h1V397ZM247 397V410h1V397ZM248 390V410h1V390ZM249 390V410h1V390ZM250 390V410h1V390ZM251 390V410h1V390ZM253 390V410h1V390ZM258 390V410h1V390ZM259 390V410h1V390ZM260 390V410h1V390ZM261 390V410h1V390ZM262 390V410h1V390ZM263 390V410h1V390ZM264 397V410h1V397ZM265 397V410h1V397ZM266 397V410h1V397ZM267 397V410h1V397ZM268 397V410h1V397ZM269 397V410h1V397ZM270 390V410h1V390ZM271 390V410h1V390ZM272 390V410h1V390ZM273 390V410h1V390ZM274 390V410h1V390ZM275 390V410h1V390ZM277 397V410h1V397ZM279 397V410h1V397ZM280 397V410h1V397ZM281 390V410h1V390ZM282 390V410h1V390ZM283 390V410h1V390ZM284 390V410h1V390ZM285 390V410h1V390ZM286 390V410h1V390ZM287 390V410h1V390ZM294 390V410h1V390ZM295 390V410h1V390ZM296 390V410h1V390ZM297 390V410h1V390ZM298 397V410h1V397ZM299 397V410h1V397ZM300 397V410h1V397ZM301 397V410h1V397ZM302 397V410h1V397ZM303 397V410h1V397ZM304 390V410h1V390ZM305 390V410h1V390ZM306 390V410h1V390ZM307 390V410h1V390ZM308 390V410h1V390ZM309 397V410h1V397ZM310 397V410h1V397ZM311 397V410h1V397ZM312 397V410h1V397ZM313 397V410h1V397ZM315 397V410h1V397ZM316 397V410h1V397ZM317 397V410h1V397ZM318 397V410h1V397ZM319 390V410h1V390ZM320 390V410h1V390ZM321 390V410h1V390ZM322 390V410h1V390ZM323 390V410h1V390ZM324 390V410h1V390ZM325 397V410h1V397ZM326 397V410h1V397ZM327 397V410h1V397ZM328 397V410h1V397ZM329 397V410h1V397ZM330 397V410h1V397ZM331 397V410h1V397ZM332 397V410h1V397ZM334 390V410h1V390ZM335 390V410h1V390ZM336 390V410h1V390ZM337 390V410h1V390ZM338 390V410h1V390ZM340 390V410h1V390ZM341 390V410h1V390ZM342 397V410h1V397ZM343 397V410h1V397ZM344 397V410h1V397ZM345 390V410h1V390ZM346 390V410h1V390ZM347 390V410h1V390ZM348 390V410h1V390ZM351 390V410h1V390ZM352 390V410h1V390ZM354 397V410h1V397ZM356 397V410h1V397ZM357 397V410h1V397ZM358 390V410h1V390ZM359 390V410h1V390ZM360 390V410h1V390ZM361 390V410h1V390ZM362 390V410h1V390ZM363 397V410h1V397ZM364 397V410h1V397ZM365 397V410h1V397ZM366 397V410h1V397ZM367 397V410h1V397ZM368 397V410h1V397ZM369 397V410h1V397ZM370 397V410h1V397ZM371 397V410h1V397ZM372 397V410h1V397ZM373 397V410h1V397ZM375 397V410h1V397ZM376 397V410h1V397ZM377 397V410h1V397ZM379 397V410h1V397ZM380 397V410h1V397ZM381 390V410h1V390ZM382 390V410h1V390ZM384 390V410h1V390ZM385 390V410h1V390ZM386 390V410h1V390ZM388 390V410h1V390ZM389 390V410h1V390ZM390 390V410h1V390ZM391 390V410h1V390ZM392 397V410h1V397ZM393 397V410h1V397ZM394 397V410h1V397ZM395 397V410h1V397ZM396 397V410h1V397ZM398 390V410h1V390ZM399 390V410h1V390ZM400 390V410h1V390ZM401 390V410h1V390ZM402 390V410h1V390ZM403 390V410h1V390ZM406 397V410h1V397ZM407 397V410h1V397ZM408 397V410h1V397ZM409 397V410h1V397ZM410 390V410h1V390ZM411 390V410h1V390ZM412 390V410h1V390ZM417 390V410h1V390ZM419 390V410h1V390ZM420 390V410h1V390ZM421 390V410h1V390ZM427 390V410h1V390ZM428 390V410h1V390ZM429 390V410h1V390ZM430 390V410h1V390ZM431 390V410h1V390ZM432 397V410h1V397ZM433 397V410h1V397ZM435 390V410h1V390ZM436 390V410h1V390ZM437 390V410h1V390ZM438 390V410h1V390ZM440 397V410h1V397ZM441 397V410h1V397ZM442 397V410h1V397ZM444 390V410h1V390ZM445 390V410h1V390ZM447 390V410h1V390ZM448 390V410h1V390ZM456 390V410h1V390ZM457 390V410h1V390ZM458 390V410h1V390ZM459 390V410h1V390ZM460 390V410h1V390ZM465 397V410h1V397ZM466 397V410h1V397ZM467 397V410h1V397ZM469 397V410h1V397ZM470 390V410h1V390ZM471 390V410h1V390ZM472 390V410h1V390ZM473 390V410h1V390ZM474 390V410h1V390Z" fill="#22c400" shape-rendering="crispEdges"/><path d="M196 359V410h1V359ZM197 353V410h1V353ZM198 353V410h1V353ZM255 366V410h1V366ZM350 366V410h1V366ZM355 353V410h1V353ZM418 366V410h1V366ZM425 366V410h1V366ZM434 359V410h1V359ZM443 366V410h1V366ZM468 359V410h1V359ZM478 353V410h1V353ZM479 366V410h1V366ZM480 359V410h1V359ZM489 366V410h1V366ZM495 359V410h1V359ZM501 341V410h1V341ZM504 366V410h1V366ZM510 353V410h1V353ZM511 353V410h1V353ZM513 366V410h1V366ZM514 366V410h1V366ZM515 359V410h1V359ZM516 366V410h1V366ZM517 366V410h1V366ZM518 366V410h1V366ZM527 366V410h1V366ZM529 366V410h1V366ZM534 359V410h1V359ZM544 347V410h1V347ZM550 366V410h1V366ZM559 366V410h1V366ZM560 366V410h1V366ZM561 366V410h1V366ZM563 366V410h1V366ZM575 366V410h1V366ZM577 366V410h1V366ZM580 366V410h1V366ZM582 366V410h1V366ZM585 359V410h1V359ZM590 366V410h1V366Z" fill="#70ca10" shape-rendering="crispEdges"/><path d="M191 334h1v1h-1ZM191 335h1v1h-1ZM192 336h1v1h-1ZM192 337h1v1h-1ZM193 338h1v1h-1ZM193 339h1v1h-1ZM194 335h1v1h-1ZM194 336h1v1h-1ZM194 337h1v1h-1ZM195 333h1v1h-1ZM195 334h1v1h-1ZM196 335h1v1h-1ZM196 336h1v1h-1ZM196 337h1v1h-1ZM197 338h1v1h-1ZM197 339h1v1h-1ZM198 337h1v1h-1ZM198 338h1v1h-1ZM199 335h1v1h-1ZM199 336h1v1h-1ZM200 336h1v1h-1ZM200 337h1v1h-1ZM201 337h1v1h-1ZM201 338h1v1h-1ZM202 335h1v1h-1ZM202 336h1v1h-1ZM203 333h1v1h-1ZM203 334h1v1h-1ZM204 335h1v1h-1ZM204 336h1v1h-1ZM204 337h1v1h-1ZM205 338h1v1h-1ZM205 339h1v1h-1ZM206 337h1v1h-1ZM206 338h1v1h-1ZM207 335h1v1h-1ZM207 336h1v1h-1ZM208 336h1v1h-1ZM208 337h1v1h-1ZM209 338h1v1h-1ZM210 336h1v1h-1ZM210 337h1v1h-1ZM211 334h1v1h-1ZM211 335h1v1h-1ZM212 333h1v1h-1ZM213 333h1v1h-1ZM214 333h1v1h-1ZM215 334h1v1h-1ZM215 335h1v1h-1ZM216 336h1v1h-1ZM216 337h1v1h-1ZM217 338h1v1h-1ZM217 339h1v1h-1ZM218 335h1v1h-1ZM218 336h1v1h-1ZM218 337h1v1h-1ZM219 333h1v1h-1ZM219 334h1v1h-1ZM220 335h1v1h-1ZM220 336h1v1h-1ZM220 337h1v1h-1ZM221 338h1v1h-1ZM221 339h1v1h-1ZM222 335h1v1h-1ZM222 336h1v1h-1ZM222 337h1v1h-1ZM223 333h1v1h-1ZM223 334h1v1h-1ZM224 335h1v1h-1ZM224 336h1v1h-1ZM225 337h1v1h-1ZM225 338h1v1h-1ZM226 336h1v1h-1ZM226 337h1v1h-1ZM227 335h1v1h-1ZM227 336h1v1h-1ZM228 337h1v1h-1ZM228 338h1v1h-1ZM229 339h1v1h-1ZM229 340h1v1h-1ZM230 338h1v1h-1ZM230 339h1v1h-1ZM231 336h1v1h-1ZM231 337h1v1h-1ZM232 335h1v1h-1ZM232 336h1v1h-1ZM233 337h1v1h-1ZM233 338h1v1h-1ZM234 339h1v1h-1ZM234 340h1v1h-1ZM235 338h1v1h-1ZM235 339h1v1h-1ZM236 336h1v1h-1ZM236 337h1v1h-1ZM237 335h1v1h-1ZM238 335h1v1h-1ZM238 336h1v1h-1ZM239 337h1v1h-1ZM239 338h1v1h-1ZM240 339h1v1h-1ZM240 340h1v1h-1ZM241 337h1v1h-1ZM241 338h1v1h-1ZM242 335h1v1h-1ZM242 336h1v1h-1ZM243 336h1v1h-1ZM244 337h1v1h-1ZM244 338h1v1h-1ZM245 339h1v1h-1ZM246 338h1v1h-1ZM247 336h1v1h-1ZM247 337h1v1h-1ZM248 334h1v1h-1ZM248 335h1v1h-1ZM249 336h1v1h-1ZM249 337h1v1h-1ZM249 338h1v1h-1ZM250 339h1v1h-1ZM250 340h1v1h-1ZM251 336h1v1h-1ZM251 337h1v1h-1ZM251 338h1v1h-1ZM252 334h1v1h-1ZM252 335h1v1h-1ZM253 335h1v1h-1ZM254 335h1v1h-1ZM255 336h1v1h-1ZM255 337h1v1h-1ZM256 338h1v1h-1ZM256 339h1v1h-1ZM257 337h1v1h-1ZM257 338h1v1h-1ZM258 335h1v1h-1ZM258 336h1v1h-1ZM259 337h1v1h-1ZM259 338h1v1h-1ZM260 337h1v1h-1ZM261 336h1v1h-1ZM262 335h1v1h-1ZM262 336h1v1h-1ZM263 337h1v1h-1ZM263 338h1v1h-1ZM264 336h1v1h-1ZM264 337h1v1h-1ZM265 334h1v1h-1ZM265 335h1v1h-1ZM266 335h1v1h-1ZM267 336h1v1h-1ZM267 337h1v1h-1ZM268 338h1v1h-1ZM269 336h1v1h-1ZM269 337h1v1h-1ZM270 335h1v1h-1ZM270 336h1v1h-1ZM271 337h1v1h-1ZM271 338h1v1h-1ZM271 339h1v1h-1ZM272 338h1v1h-1ZM273 338h1v1h-1ZM274 339h1v1h-1ZM275 337h1v1h-1ZM275 338h1v1h-1ZM276 335h1v1h-1ZM276 336h1v1h-1ZM277 335h1v1h-1ZM277 336h1v1h-1ZM278 337h1v1h-1ZM278 338h1v1h-1ZM279 339h1v1h-1ZM279 340h1v1h-1ZM280 335h1v1h-1ZM280 336h1v1h-1ZM280 337h1v1h-1ZM280 338h1v1h-1ZM281 333h1v1h-1ZM281 334h1v1h-1ZM282 335h1v1h-1ZM282 336h1v1h-1ZM282 337h1v1h-1ZM283 338h1v1h-1ZM283 339h1v1h-1ZM284 338h1v1h-1ZM285 336h1v1h-1ZM285 337h1v1h-1ZM286 335h1v1h-1ZM287 336h1v1h-1ZM288 337h1v1h-1ZM289 335h1v1h-1ZM289 336h1v1h-1ZM290 336h1v1h-1ZM290 337h1v1h-1ZM291 338h1v1h-1ZM291 339h1v1h-1ZM292 338h1v1h-1ZM293 336h1v1h-1ZM293 337h1v1h-1ZM294 335h1v1h-1ZM295 335h1v1h-1ZM296 335h1v1h-1ZM297 335h1v1h-1ZM298 336h1v1h-1ZM298 337h1v1h-1ZM299 337h1v1h-1ZM299 338h1v1h-1ZM299 339h1v1h-1ZM300 333h1v1h-1ZM300 334h1v1h-1ZM300 335h1v1h-1ZM300 336h1v1h-1ZM301 335h1v1h-1ZM301 336h1v1h-1ZM302 337h1v1h-1ZM302 338h1v1h-1ZM303 339h1v1h-1ZM303 340h1v1h-1ZM304 337h1v1h-1ZM304 338h1v1h-1ZM305 335h1v1h-1ZM305 336h1v1h-1ZM306 336h1v1h-1ZM307 337h1v1h-1ZM308 336h1v1h-1ZM309 335h1v1h-1ZM310 335h1v1h-1ZM311 335h1v1h-1ZM312 336h1v1h-1ZM312 337h1v1h-1ZM313 337h1v1h-1ZM313 338h1v1h-1ZM313 339h1v1h-1ZM314 334h1v1h-1ZM314 335h1v1h-1ZM314 336h1v1h-1ZM315 335h1v1h-1ZM316 336h1v1h-1ZM316 337h1v1h-1ZM317 338h1v1h-1ZM318 336h1v1h-1ZM318 337h1v1h-1ZM319 335h1v1h-1ZM319 336h1v1h-1ZM320 337h1v1h-1ZM320 338h1v1h-1ZM321 339h1v1h-1ZM321 340h1v1h-1ZM322 339h1v1h-1ZM323 338h1v1h-1ZM323 339h1v1h-1ZM324 336h1v1h-1ZM324 337h1v1h-1ZM325 334h1v1h-1ZM325 335h1v1h-1ZM326 334h1v1h-1ZM327 334h1v1h-1ZM328 335h1v1h-1ZM328 336h1v1h-1ZM329 337h1v1h-1ZM329 338h1v1h-1ZM330 335h1v1h-1ZM330 336h1v1h-1ZM331 337h1v1h-1ZM331 338h1v1h-1ZM331 339h1v1h-1ZM332 338h1v1h-1ZM333 337h1v1h-1ZM334 335h1v1h-1ZM334 336h1v1h-1ZM335 333h1v1h-1ZM335 334h1v1h-1ZM336 334h1v1h-1ZM336 335h1v1h-1ZM337 336h1v1h-1ZM337 337h1v1h-1ZM338 336h1v1h-1ZM339 335h1v1h-1ZM340 336h1v1h-1ZM340 337h1v1h-1ZM341 338h1v1h-1ZM341 339h1v1h-1ZM342 335h1v1h-1ZM342 336h1v1h-1ZM342 337h1v1h-1ZM343 333h1v1h-1ZM343 334h1v1h-1ZM344 334h1v1h-1ZM344 335h1v1h-1ZM345 336h1v1h-1ZM345 337h1v1h-1ZM346 338h1v1h-1ZM346 339h1v1h-1ZM347 335h1v1h-1ZM347 336h1v1h-1ZM347 337h1v1h-1ZM348 333h1v1h-1ZM348 334h1v1h-1ZM349 335h1v1h-1ZM349 336h1v1h-1ZM350 337h1v1h-1ZM350 338h1v1h-1ZM351 335h1v1h-1ZM351 336h1v1h-1ZM352 333h1v1h-1ZM352 334h1v1h-1ZM353 335h1v1h-1ZM353 336h1v1h-1ZM353 337h1v1h-1ZM354 338h1v1h-1ZM354 339h1v1h-1ZM355 337h1v1h-1ZM355 338h1v1h-1ZM356 335h1v1h-1ZM356 336h1v1h-1ZM357 336h1v1h-1ZM357 337h1v1h-1ZM358 337h1v1h-1ZM358 338h1v1h-1ZM358 339h1v1h-1ZM359 333h1v1h-1ZM359 334h1v1h-1ZM359 335h1v1h-1ZM359 336h1v1h-1ZM360 334h1v1h-1ZM361 334h1v1h-1ZM361 335h1v1h-1ZM362 336h1v1h-1ZM362 337h1v1h-1ZM363 338h1v1h-1ZM363 339h1v1h-1ZM364 340h1v1h-1ZM365 339h1v1h-1ZM365 340h1v1h-1ZM366 337h1v1h-1ZM366 338h1v1h-1ZM367 335h1v1h-1ZM367 336h1v1h-1ZM368 337h1v1h-1ZM368 338h1v1h-1ZM368 339h1v1h-1ZM369 337h1v1h-1ZM369 338h1v1h-1ZM370 335h1v1h-1ZM370 336h1v1h-1ZM371 337h1v1h-1ZM371 338h1v1h-1ZM372 339h1v1h-1ZM372 340h1v1h-1ZM373 338h1v1h-1ZM373 339h1v1h-1ZM374 335h1v1h-1ZM374 336h1v1h-1ZM374 337h1v1h-1ZM375 336h1v1h-1ZM375 337h1v1h-1ZM376 338h1v1h-1ZM376 339h1v1h-1ZM377 335h1v1h-1ZM377 336h1v1h-1ZM377 337h1v1h-1ZM378 333h1v1h-1ZM378 334h1v1h-1ZM379 335h1v1h-1ZM379 336h1v1h-1ZM379 337h1v1h-1ZM379 338h1v1h-1ZM380 338h1v1h-1ZM380 339h1v1h-1ZM380 340h1v1h-1ZM381 335h1v1h-1ZM381 336h1v1h-1ZM381 337h1v1h-1ZM382 336h1v1h-1ZM382 337h1v1h-1ZM383 337h1v1h-1ZM383 338h1v1h-1ZM383 339h1v1h-1ZM384 334h1v1h-1ZM384 335h1v1h-1ZM384 336h1v1h-1ZM385 334h1v1h-1ZM385 335h1v1h-1ZM386 336h1v1h-1ZM386 337h1v1h-1ZM387 337h1v1h-1ZM387 338h1v1h-1ZM387 339h1v1h-1ZM388 331h1v1h-1ZM388 332h1v1h-1ZM388 333h1v1h-1ZM388 334h1v1h-1ZM388 335h1v1h-1ZM388 336h1v1h-1ZM389 328h1v1h-1ZM389 329h1v1h-1ZM389 330h1v1h-1ZM389 331h1v1h-1ZM389 332h1v1h-1ZM390 333h1v1h-1ZM390 334h1v1h-1ZM390 335h1v1h-1ZM390 336h1v1h-1ZM390 337h1v1h-1ZM391 336h1v1h-1ZM392 334h1v1h-1ZM392 335h1v1h-1ZM393 333h1v1h-1ZM393 334h1v1h-1ZM394 335h1v1h-1ZM394 336h1v1h-1ZM394 337h1v1h-1ZM395 338h1v1h-1ZM395 339h1v1h-1ZM396 338h1v1h-1ZM397 336h1v1h-1ZM397 337h1v1h-1ZM398 335h1v1h-1ZM398 336h1v1h-1ZM399 337h1v1h-1ZM399 338h1v1h-1ZM400 339h1v1h-1ZM400 340h1v1h-1ZM401 339h1v1h-1ZM402 338h1v1h-1ZM403 336h1v1h-1ZM403 337h1v1h-1ZM404 334h1v1h-1ZM404 335h1v1h-1ZM405 336h1v1h-1ZM405 337h1v1h-1ZM405 338h1v1h-1ZM406 339h1v1h-1ZM406 340h1v1h-1ZM407 338h1v1h-1ZM407 339h1v1h-1ZM408 336h1v1h-1ZM408 337h1v1h-1ZM409 334h1v1h-1ZM409 335h1v1h-1ZM410 336h1v1h-1ZM410 337h1v1h-1ZM411 337h1v1h-1ZM411 338h1v1h-1ZM411 339h1v1h-1ZM412 333h1v1h-1ZM412 334h1v1h-1ZM412 335h1v1h-1ZM412 336h1v1h-1ZM413 336h1v1h-1ZM413 337h1v1h-1ZM413 338h1v1h-1ZM414 336h1v1h-1ZM414 337h1v1h-1ZM415 334h1v1h-1ZM415 335h1v1h-1ZM416 335h1v1h-1ZM417 336h1v1h-1ZM418 337h1v1h-1ZM419 335h1v1h-1ZM419 336h1v1h-1ZM420 334h1v1h-1ZM421 335h1v1h-1ZM421 336h1v1h-1ZM422 337h1v1h-1ZM422 338h1v1h-1ZM423 336h1v1h-1ZM423 337h1v1h-1ZM424 335h1v1h-1ZM425 336h1v1h-1ZM426 337h1v1h-1ZM427 338h1v1h-1ZM428 337h1v1h-1ZM429 336h1v1h-1ZM430 337h1v1h-1ZM430 338h1v1h-1ZM431 339h1v1h-1ZM431 340h1v1h-1ZM432 335h1v1h-1ZM432 336h1v1h-1ZM432 337h1v1h-1ZM432 338h1v1h-1ZM433 333h1v1h-1ZM433 334h1v1h-1ZM434 335h1v1h-1ZM434 336h1v1h-1ZM434 337h1v1h-1ZM435 338h1v1h-1ZM435 339h1v1h-1ZM436 335h1v1h-1ZM436 336h1v1h-1ZM436 337h1v1h-1ZM437 333h1v1h-1ZM437 334h1v1h-1ZM438 334h1v1h-1ZM438 335h1v1h-1ZM439 336h1v1h-1ZM439 337h1v1h-1ZM440 338h1v1h-1ZM440 339h1v1h-1ZM441 334h1v1h-1ZM441 335h1v1h-1ZM441 336h1v1h-1ZM441 337h1v1h-1ZM442 331h1v1h-1ZM442 332h1v1h-1ZM442 333h1v1h-1ZM443 333h1v1h-1ZM443 334h1v1h-1ZM443 335h1v1h-1ZM443 336h1v1h-1ZM444 337h1v1h-1ZM444 338h1v1h-1ZM445 336h1v1h-1ZM445 337h1v1h-1ZM446 334h1v1h-1ZM446 335h1v1h-1ZM447 335h1v1h-1ZM448 336h1v1h-1ZM448 337h1v1h-1ZM449 338h1v1h-1ZM450 336h1v1h-1ZM450 337h1v1h-1ZM451 335h1v1h-1ZM452 336h1v1h-1ZM453 337h1v1h-1ZM453 338h1v1h-1ZM454 338h1v1h-1ZM454 339h1v1h-1ZM455 336h1v1h-1ZM455 337h1v1h-1ZM456 337h1v1h-1ZM456 338h1v1h-1ZM457 339h1v1h-1ZM457 340h1v1h-1ZM458 336h1v1h-1ZM458 337h1v1h-1ZM458 338h1v1h-1ZM459 334h1v1h-1ZM459 335h1v1h-1ZM460 335h1v1h-1ZM461 336h1v1h-1ZM461 337h1v1h-1ZM462 337h1v1h-1ZM462 338h1v1h-1ZM463 333h1v1h-1ZM463 334h1v1h-1ZM463 335h1v1h-1ZM463 336h1v1h-1ZM464 330h1v1h-1ZM464 331h1v1h-1ZM464 332h1v1h-1ZM465 332h1v1h-1ZM465 333h1v1h-1ZM466 334h1v1h-1ZM466 335h1v1h-1ZM466 336h1v1h-1ZM467 337h1v1h-1ZM467 338h1v1h-1ZM468 336h1v1h-1ZM468 337h1v1h-1ZM469 334h1v1h-1ZM469 335h1v1h-1ZM470 336h1v1h-1ZM470 337h1v1h-1ZM470 338h1v1h-1ZM471 335h1v1h-1ZM471 336h1v1h-1ZM472 332h1v1h-1ZM472 333h1v1h-1ZM472 334h1v1h-1ZM473 328h1v1h-1ZM473 329h1v1h-1ZM473 330h1v1h-1ZM473 331h1v1h-1ZM474 325h1v1h-1ZM474 326h1v1h-1ZM474 327h1v1h-1ZM475 327h1v1h-1ZM475 328h1v1h-1ZM475 329h1v1h-1ZM475 330h1v1h-1ZM476 331h1v1h-1ZM476 332h1v1h-1ZM476 333h1v1h-1ZM477 334h1v1h-1ZM477 335h1v1h-1ZM478 333h1v1h-1ZM478 334h1v1h-1ZM479 331h1v1h-1ZM479 332h1v1h-1ZM479 333h1v1h-1ZM480 334h1v1h-1ZM480 335h1v1h-1ZM480 336h1v1h-1ZM481 331h1v1h-1ZM481 332h1v1h-1ZM481 333h1v1h-1ZM482 332h1v1h-1ZM482 333h1v1h-1ZM483 334h1v1h-1ZM483 335h1v1h-1ZM484 333h1v1h-1ZM484 334h1v1h-1ZM485 332h1v1h-1ZM486 333h1v1h-1ZM487 333h1v1h-1ZM488 334h1v1h-1ZM489 333h1v1h-1ZM490 332h1v1h-1ZM491 331h1v1h-1ZM491 332h1v1h-1ZM492 333h1v1h-1ZM492 334h1v1h-1ZM493 335h1v1h-1ZM493 336h1v1h-1ZM494 333h1v1h-1ZM494 334h1v1h-1ZM495 331h1v1h-1ZM495 332h1v1h-1ZM496 333h1v1h-1ZM496 334h1v1h-1ZM496 335h1v1h-1ZM497 335h1v1h-1ZM497 336h1v1h-1ZM497 337h1v1h-1ZM498 332h1v1h-1ZM498 333h1v1h-1ZM498 334h1v1h-1ZM499 330h1v1h-1ZM499 331h1v1h-1ZM500 328h1v1h-1ZM500 329h1v1h-1ZM501 329h1v1h-1ZM501 330h1v1h-1ZM502 331h1v1h-1ZM502 332h1v1h-1ZM503 333h1v1h-1ZM503 334h1v1h-1ZM504 333h1v1h-1ZM504 334h1v1h-1ZM504 335h1v1h-1ZM505 330h1v1h-1ZM505 331h1v1h-1ZM505 332h1v1h-1ZM506 332h1v1h-1ZM506 333h1v1h-1ZM507 334h1v1h-1ZM507 335h1v1h-1ZM508 335h1v1h-1ZM509 335h1v1h-1ZM510 333h1v1h-1ZM510 334h1v1h-1ZM511 332h1v1h-1ZM511 333h1v1h-1ZM512 334h1v1h-1ZM512 335h1v1h-1ZM512 336h1v1h-1ZM513 334h1v1h-1ZM513 335h1v1h-1ZM514 333h1v1h-1ZM515 334h1v1h-1ZM516 335h1v1h-1ZM516 336h1v1h-1ZM517 337h1v1h-1ZM518 338h1v1h-1ZM519 337h1v1h-1ZM519 338h1v1h-1ZM519 339h1v1h-1ZM520 334h1v1h-1ZM520 335h1v1h-1ZM520 336h1v1h-1ZM521 335h1v1h-1ZM522 336h1v1h-1ZM522 337h1v1h-1ZM523 337h1v1h-1ZM523 338h1v1h-1ZM524 334h1v1h-1ZM524 335h1v1h-1ZM524 336h1v1h-1ZM525 336h1v1h-1ZM525 337h1v1h-1ZM526 338h1v1h-1ZM526 339h1v1h-1ZM527 340h1v1h-1ZM528 341h1v1h-1ZM529 339h1v1h-1ZM529 340h1v1h-1ZM530 337h1v1h-1ZM530 338h1v1h-1ZM531 338h1v1h-1ZM531 339h1v1h-1ZM532 339h1v1h-1ZM532 340h1v1h-1ZM533 337h1v1h-1ZM533 338h1v1h-1ZM534 335h1v1h-1ZM534 336h1v1h-1ZM535 337h1v1h-1ZM535 338h1v1h-1ZM535 339h1v1h-1ZM536 340h1v1h-1ZM536 341h1v1h-1ZM537 340h1v1h-1ZM538 340h1v1h-1ZM539 339h1v1h-1ZM540 337h1v1h-1ZM540 338h1v1h-1ZM541 338h1v1h-1ZM541 339h1v1h-1ZM542 340h1v1h-1ZM542 341h1v1h-1ZM543 338h1v1h-1ZM543 339h1v1h-1ZM544 336h1v1h-1ZM544 337h1v1h-1ZM545 336h1v1h-1ZM546 336h1v1h-1ZM546 337h1v1h-1ZM546 338h1v1h-1ZM547 339h1v1h-1ZM547 340h1v1h-1ZM547 341h1v1h-1ZM548 336h1v1h-1ZM548 337h1v1h-1ZM548 338h1v1h-1ZM549 337h1v1h-1ZM549 338h1v1h-1ZM550 339h1v1h-1ZM551 338h1v1h-1ZM552 337h1v1h-1ZM553 338h1v1h-1ZM554 339h1v1h-1ZM554 340h1v1h-1ZM555 341h1v1h-1ZM556 339h1v1h-1ZM556 340h1v1h-1ZM557 337h1v1h-1ZM557 338h1v1h-1ZM558 338h1v1h-1ZM558 339h1v1h-1ZM559 338h1v1h-1ZM559 339h1v1h-1ZM559 340h1v1h-1ZM560 335h1v1h-1ZM560 336h1v1h-1ZM560 337h1v1h-1ZM561 335h1v1h-1ZM562 336h1v1h-1ZM563 336h1v1h-1ZM564 337h1v1h-1ZM564 338h1v1h-1ZM565 339h1v1h-1ZM565 340h1v1h-1ZM566 340h1v1h-1ZM566 341h1v1h-1ZM567 338h1v1h-1ZM567 339h1v1h-1ZM568 336h1v1h-1ZM568 337h1v1h-1ZM569 338h1v1h-1ZM569 339h1v1h-1ZM569 340h1v1h-1ZM570 341h1v1h-1ZM570 342h1v1h-1ZM571 339h1v1h-1ZM571 340h1v1h-1ZM572 337h1v1h-1ZM572 338h1v1h-1ZM573 336h1v1h-1ZM574 336h1v1h-1ZM574 337h1v1h-1ZM575 338h1v1h-1ZM575 339h1v1h-1ZM575 340h1v1h-1ZM576 341h1v1h-1ZM576 342h1v1h-1ZM577 341h1v1h-1ZM578 340h1v1h-1ZM579 341h1v1h-1ZM580 339h1v1h-1ZM580 340h1v1h-1ZM580 341h1v1h-1ZM581 335h1v1h-1ZM581 336h1v1h-1ZM581 337h1v1h-1ZM581 338h1v1h-1ZM582 337h1v1h-1ZM582 338h1v1h-1ZM582 339h1v1h-1ZM582 340h1v1h-1ZM583 341h1v1h-1ZM583 342h1v1h-1ZM584 337h1v1h-1ZM584 338h1v1h-1ZM584 339h1v1h-1ZM584 340h1v1h-1ZM585 335h1v1h-1ZM585 336h1v1h-1ZM586 337h1v1h-1ZM586 338h1v1h-1ZM587 339h1v1h-1ZM587 340h1v1h-1ZM588 341h1v1h-1ZM588 342h1v1h-1ZM589 339h1v1h-1ZM589 340h1v1h-1ZM590 337h1v1h-1ZM590 338h1v1h-1ZM591 336h1v1h-1ZM592 335h1v1h-1Z" fill="#e0a0e0" shape-rendering="crispEdges"/><path d="M189 283H624v2H191V410H189Z M622 285h2V410h-2Z" fill="#000" shape-rendering="crispEdges"/><path d="M186 284h3v1h-3ZM186 316h3v1h-3ZM186 347h3v1h-3ZM186 378h3v1h-3ZM190 410h1v1h-1ZM233 410h1v1h-1ZM276 410h1v1h-1ZM319 410h1v1h-1ZM362 410h1v1h-1ZM406 410h1v1h-1ZM449 410h1v1h-1ZM492 410h1v1h-1ZM535 410h1v1h-1ZM578 410h1v1h-1ZM622 410h1v1h-1Z" fill="#000" shape-rendering="crispEdges"/></svg>
<div style="position:absolute;left:191px;top:117px;width:6px;height:8px;background:#008000"></div>
<div class="t" style="left:200.05px;top:116px;font-size:11px;line-height:11px;color:#000;font-weight:normal;transform:scaleX(0.9041);transform-origin:left top;">LDC</div>
<div style="position:absolute;left:223px;top:117px;width:6px;height:8px;background:#88ccf8"></div>
<div class="t" style="left:231.91px;top:116px;font-size:11px;line-height:11px;color:#000;font-weight:normal;transform:scaleX(0.9824);transform-origin:left top;">Read speed</div>
<div style="position:absolute;left:293px;top:117px;width:6px;height:8px;background:#f888f0"></div>
<div class="t" style="left:301.49px;top:116px;font-size:11px;line-height:11px;color:#000;font-weight:normal;transform:scaleX(1.0139);transform-origin:left top;">Write speed</div>
<div style="position:absolute;left:191px;top:273px;width:6px;height:8px;background:#008000"></div>
<div class="t" style="left:199.84px;top:272px;font-size:11px;line-height:11px;color:#000;font-weight:normal;transform:scaleX(0.9200);transform-origin:left top;">BIS</div>
<div style="position:absolute;left:219px;top:273px;width:6px;height:8px;background:#d8a8d8"></div>
<div class="t" style="left:227.54px;top:272px;font-size:11px;line-height:11px;color:#000;font-weight:normal;transform:scaleX(0.9200);transform-origin:left top;">Jitter</div>
<div style="position:absolute;left:254px;top:270px;width:6px;height:3px;background:#000"></div>
<div class="t" style="left:167.54px;top:228px;font-size:11px;line-height:11px;color:#000;font-weight:normal;">100</div>
<div class="t" style="left:167.54px;top:207px;font-size:11px;line-height:11px;color:#000;font-weight:normal;">200</div>
<div class="t" style="left:167.54px;top:186px;font-size:11px;line-height:11px;color:#000;font-weight:normal;">300</div>
<div class="t" style="left:167.54px;top:165px;font-size:11px;line-height:11px;color:#000;font-weight:normal;">400</div>
<div class="t" style="left:167.54px;top:144px;font-size:11px;line-height:11px;color:#000;font-weight:normal;">500</div>
<div class="t" style="left:167.54px;top:123px;font-size:11px;line-height:11px;color:#000;font-weight:normal;">600</div>
<div class="t" style="left:626.82px;top:235px;font-size:11px;line-height:11px;color:#000;font-weight:normal;transform:scaleX(0.9500);transform-origin:left top;">2 X</div>
<div class="t" style="left:626.82px;top:221px;font-size:11px;line-height:11px;color:#000;font-weight:normal;transform:scaleX(0.9500);transform-origin:left top;">4 X</div>
<div class="t" style="left:626.82px;top:207px;font-size:11px;line-height:11px;color:#000;font-weight:normal;transform:scaleX(0.9500);transform-origin:left top;">6 X</div>
<div class="t" style="left:626.82px;top:193px;font-size:11px;line-height:11px;color:#000;font-weight:normal;transform:scaleX(0.9500);transform-origin:left top;">8 X</div>
<div class="t" style="left:626.82px;top:179px;font-size:11px;line-height:11px;color:#000;font-weight:normal;transform:scaleX(0.9500);transform-origin:left top;">10 X</div>
<div class="t" style="left:626.82px;top:165px;font-size:11px;line-height:11px;color:#000;font-weight:normal;transform:scaleX(0.9500);transform-origin:left top;">12 X</div>
<div class="t" style="left:626.82px;top:151px;font-size:11px;line-height:11px;color:#000;font-weight:normal;transform:scaleX(0.9500);transform-origin:left top;">14 X</div>
<div class="t" style="left:626.82px;top:137px;font-size:11px;line-height:11px;color:#000;font-weight:normal;transform:scaleX(0.9500);transform-origin:left top;">16 X</div>
<div class="t" style="left:626.82px;top:123px;font-size:11px;line-height:11px;color:#000;font-weight:normal;transform:scaleX(0.9500);transform-origin:left top;">18 X</div>
<div class="t" style="left:181.65px;top:255px;font-size:11px;line-height:11px;color:#000;font-weight:normal;">0.0</div>
<div class="t" style="left:224.85px;top:255px;font-size:11px;line-height:11px;color:#000;font-weight:normal;">2.5</div>
<div class="t" style="left:268.05px;top:255px;font-size:11px;line-height:11px;color:#000;font-weight:normal;">5.0</div>
<div class="t" style="left:311.25px;top:255px;font-size:11px;line-height:11px;color:#000;font-weight:normal;">7.5</div>
<div class="t" style="left:351.39px;top:255px;font-size:11px;line-height:11px;color:#000;font-weight:normal;">10.0</div>
<div class="t" style="left:394.59px;top:255px;font-size:11px;line-height:11px;color:#000;font-weight:normal;">12.5</div>
<div class="t" style="left:437.79px;top:255px;font-size:11px;line-height:11px;color:#000;font-weight:normal;">15.0</div>
<div class="t" style="left:480.99px;top:255px;font-size:11px;line-height:11px;color:#000;font-weight:normal;">17.5</div>
<div class="t" style="left:524.19px;top:255px;font-size:11px;line-height:11px;color:#000;font-weight:normal;">20.0</div>
<div class="t" style="left:567.39px;top:255px;font-size:11px;line-height:11px;color:#000;font-weight:normal;">22.5</div>
<div class="t" style="left:600.82px;top:255px;font-size:11px;line-height:11px;color:#000;font-weight:normal;">25.0 GB</div>
<div class="t" style="left:179.78px;top:373px;font-size:11px;line-height:11px;color:#000;font-weight:normal;">5</div>
<div class="t" style="left:173.65px;top:342px;font-size:11px;line-height:11px;color:#000;font-weight:normal;">10</div>
<div class="t" style="left:173.65px;top:311px;font-size:11px;line-height:11px;color:#000;font-weight:normal;">15</div>
<div class="t" style="left:173.65px;top:279px;font-size:11px;line-height:11px;color:#000;font-weight:normal;">20</div>
<div class="t" style="left:625.50px;top:279px;font-size:11px;line-height:11px;color:#000;font-weight:normal;">20%</div>
<div class="t" style="left:625.50px;top:304px;font-size:11px;line-height:11px;color:#000;font-weight:normal;">16%</div>
<div class="t" style="left:625.50px;top:329px;font-size:11px;line-height:11px;color:#000;font-weight:normal;">12%</div>
<div class="t" style="left:625.50px;top:354px;font-size:11px;line-height:11px;color:#000;font-weight:normal;">8%</div>
<div class="t" style="left:625.50px;top:379px;font-size:11px;line-height:11px;color:#000;font-weight:normal;">4%</div>
<div class="t" style="left:181.65px;top:411px;font-size:11px;line-height:11px;color:#000;font-weight:normal;">0.0</div>
<div class="t" style="left:224.85px;top:411px;font-size:11px;line-height:11px;color:#000;font-weight:normal;">2.5</div>
<div class="t" style="left:268.05px;top:411px;font-size:11px;line-height:11px;color:#000;font-weight:normal;">5.0</div>
<div class="t" style="left:311.25px;top:411px;font-size:11px;line-height:11px;color:#000;font-weight:normal;">7.5</div>
<div class="t" style="left:351.39px;top:411px;font-size:11px;line-height:11px;color:#000;font-weight:normal;">10.0</div>
<div class="t" style="left:394.59px;top:411px;font-size:11px;line-height:11px;color:#000;font-weight:normal;">12.5</div>
<div class="t" style="left:437.79px;top:411px;font-size:11px;line-height:11px;color:#000;font-weight:normal;">15.0</div>
<div class="t" style="left:480.99px;top:411px;font-size:11px;line-height:11px;color:#000;font-weight:normal;">17.5</div>
<div class="t" style="left:524.19px;top:411px;font-size:11px;line-height:11px;color:#000;font-weight:normal;">20.0</div>
<div class="t" style="left:567.39px;top:411px;font-size:11px;line-height:11px;color:#000;font-weight:normal;">22.5</div>
<div class="t" style="left:600.82px;top:411px;font-size:11px;line-height:11px;color:#000;font-weight:normal;">25.0 GB</div>
<div class="t" style="left:250.44px;top:431px;font-size:11px;line-height:11px;color:#000;font-weight:normal;transform:scaleX(0.9200);transform-origin:right top;">LDC</div>
<div class="t" style="left:308.73px;top:431px;font-size:11px;line-height:11px;color:#000;font-weight:normal;transform:scaleX(0.9200);transform-origin:right top;">BIS</div>
<div class="t" style="left:162.47px;top:448px;font-size:11px;line-height:11px;color:#000;font-weight:normal;transform:scaleX(1.0526);transform-origin:left top;">Avg</div>
<div class="t" style="left:163.19px;top:464px;font-size:11px;line-height:11px;color:#000;font-weight:normal;transform:scaleX(1.0212);transform-origin:left top;">Max</div>
<div class="t" style="left:160.67px;top:480px;font-size:11px;line-height:11px;color:#000;font-weight:normal;transform:scaleX(1.0562);transform-origin:left top;">Total</div>
<div class="t" style="left:245.26px;top:448px;font-size:11px;line-height:11px;color:#0c0cf4;font-weight:normal;transform:scaleX(0.9800);transform-origin:right top;">29.99</div>
<div class="t" style="left:305.57px;top:448px;font-size:11px;line-height:11px;color:#0c0cf4;font-weight:normal;transform:scaleX(0.9800);transform-origin:right top;">0.48</div>
<div class="t" style="left:254.43px;top:464px;font-size:11px;line-height:11px;color:#0c0cf4;font-weight:normal;transform:scaleX(0.9800);transform-origin:right top;">542</div>
<div class="t" style="left:315.57px;top:464px;font-size:11px;line-height:11px;color:#0c0cf4;font-weight:normal;transform:scaleX(0.9800);transform-origin:right top;">11</div>
<div class="t" style="left:224.67px;top:480px;font-size:11px;line-height:11px;color:#0c0cf4;font-weight:normal;transform:scaleX(0.9800);transform-origin:right top;">11449894</div>
<div class="t" style="left:290.27px;top:480px;font-size:11px;line-height:11px;color:#0c0cf4;font-weight:normal;transform:scaleX(0.9800);transform-origin:right top;">181968</div>
<div style="position:absolute;left:395px;top:430px;width:13px;height:13px;border:1px solid #333;box-sizing:border-box"></div>
<svg style="position:absolute;left:395px;top:430px" width="13" height="13" viewBox="0 0 13 13"><path d="M2 6.5 L4.5 9 L10.8 2.7" fill="none" stroke="#333" stroke-width="1.1"/></svg>
<div class="t" style="left:416.46px;top:432px;font-size:11px;line-height:11px;color:#000;font-weight:normal;transform:scaleX(1.0725);transform-origin:left top;">Jitter</div>
<div class="t" style="left:411.81px;top:448px;font-size:11px;line-height:11px;color:#0c0cf4;font-weight:normal;transform:scaleX(0.9634);transform-origin:right top;">11.5%</div>
<div class="t" style="left:410.97px;top:464px;font-size:11px;line-height:11px;color:#0c0cf4;font-weight:normal;transform:scaleX(0.9370);transform-origin:right top;">13.2%</div>
<div class="t" style="left:460.90px;top:436px;font-size:11px;line-height:11px;color:#000;font-weight:normal;transform:scaleX(1.0061);transform-origin:left top;">Speed</div>
<div class="t" style="left:519.41px;top:437px;font-size:11px;line-height:11px;color:#0c0cf4;font-weight:normal;transform:scaleX(0.9736);transform-origin:left top;">4.18 X</div>
<div class="t" style="left:460.86px;top:464px;font-size:11px;line-height:11px;color:#000;font-weight:normal;transform:scaleX(1.0750);transform-origin:left top;">Position</div>
<div class="t" style="left:519.90px;top:464px;font-size:11px;line-height:11px;color:#0c0cf4;font-weight:normal;">23862 MB</div>
<div class="t" style="left:460.91px;top:480px;font-size:11px;line-height:11px;color:#000;font-weight:normal;transform:scaleX(0.9809);transform-origin:left top;">Samples</div>
<div class="t" style="left:519.70px;top:480px;font-size:11px;line-height:11px;color:#0c0cf4;font-weight:normal;">379320</div>
<div style="position:absolute;left:575px;top:428px;width:75px;height:21px;background:#e5e5e5;border:1px solid #adadad;box-sizing:border-box"></div>
<div class="t" style="left:578.41px;top:435px;font-size:11px;line-height:11px;color:#000;font-weight:normal;transform:scaleX(0.9722);transform-origin:left top;">4.0 X</div>
<svg style="position:absolute;left:637px;top:436px" width="9" height="5" viewBox="0 0 9 5"><path d="M0.5 0.5 L4.5 4.5 L8.5 0.5" fill="none" stroke="#404040" stroke-width="1"/></svg>
<div style="position:absolute;left:576px;top:452px;width:73px;height:21px;background:#e1e1e1;border:1px solid #adadad;box-sizing:border-box"></div>
<div class="t" style="left:590.06px;top:458px;font-size:11px;line-height:11px;color:#000;font-weight:normal;transform:scaleX(1.0874);transform-origin:left top;">Start full</div>
<div style="position:absolute;left:575px;top:479px;width:74px;height:21px;background:#e1e1e1;border:1px solid #adadad;box-sizing:border-box"></div>
<div class="t" style="left:587.07px;top:485px;font-size:11px;line-height:11px;color:#000;font-weight:normal;transform:scaleX(1.0689);transform-origin:left top;">Start part</div>
<div style="position:absolute;left:1px;top:505px;width:659px;height:18px;background:#f0f0f0"></div>
<div class="t" style="left:3.15px;top:509px;font-size:12px;line-height:12px;color:#000;font-weight:normal;transform:scaleX(0.8906);transform-origin:left top;">Test completed</div>
<div style="position:absolute;left:141px;top:505px;width:1px;height:17px;background:#d4d4d4"></div>
<div style="position:absolute;left:146px;top:508px;width:302px;height:13px;background:#06b025;border:1px solid #c8c0c8;box-sizing:border-box"></div>
<div style="position:absolute;left:449px;top:505px;width:1px;height:17px;background:#d7d7d7"></div>
<div class="t" style="left:454.37px;top:509px;font-size:12px;line-height:12px;color:#000;font-weight:normal;transform:scaleX(0.8564);transform-origin:left top;">100.0%</div>
<div style="position:absolute;left:507px;top:505px;width:1px;height:17px;background:#d7d7d7"></div>
<div class="t" style="left:599.03px;top:509px;font-size:12px;line-height:12px;color:#000;font-weight:normal;transform:scaleX(0.9163);transform-origin:right top;">33:13</div>
<div style="position:absolute;left:630px;top:505px;width:1px;height:17px;background:#d7d7d7"></div>
<div style="position:absolute;left:656px;top:513px;width:2px;height:2px;background:#b4b4b4"></div>
<div style="position:absolute;left:653px;top:516px;width:2px;height:2px;background:#b4b4b4"></div>
<div style="position:absolute;left:656px;top:516px;width:2px;height:2px;background:#b4b4b4"></div>
<div style="position:absolute;left:650px;top:519px;width:2px;height:2px;background:#b4b4b4"></div>
<div style="position:absolute;left:653px;top:519px;width:2px;height:2px;background:#b4b4b4"></div>
<div style="position:absolute;left:656px;top:519px;width:2px;height:2px;background:#b4b4b4"></div>
<div style="position:absolute;left:0px;top:31px;width:1px;height:493px;background:#0078d7"></div>
<div style="position:absolute;left:660px;top:31px;width:1px;height:493px;background:#0078d7"></div>
<div style="position:absolute;left:0px;top:523px;width:661px;height:1px;background:#0078d7"></div>
</body></html>
